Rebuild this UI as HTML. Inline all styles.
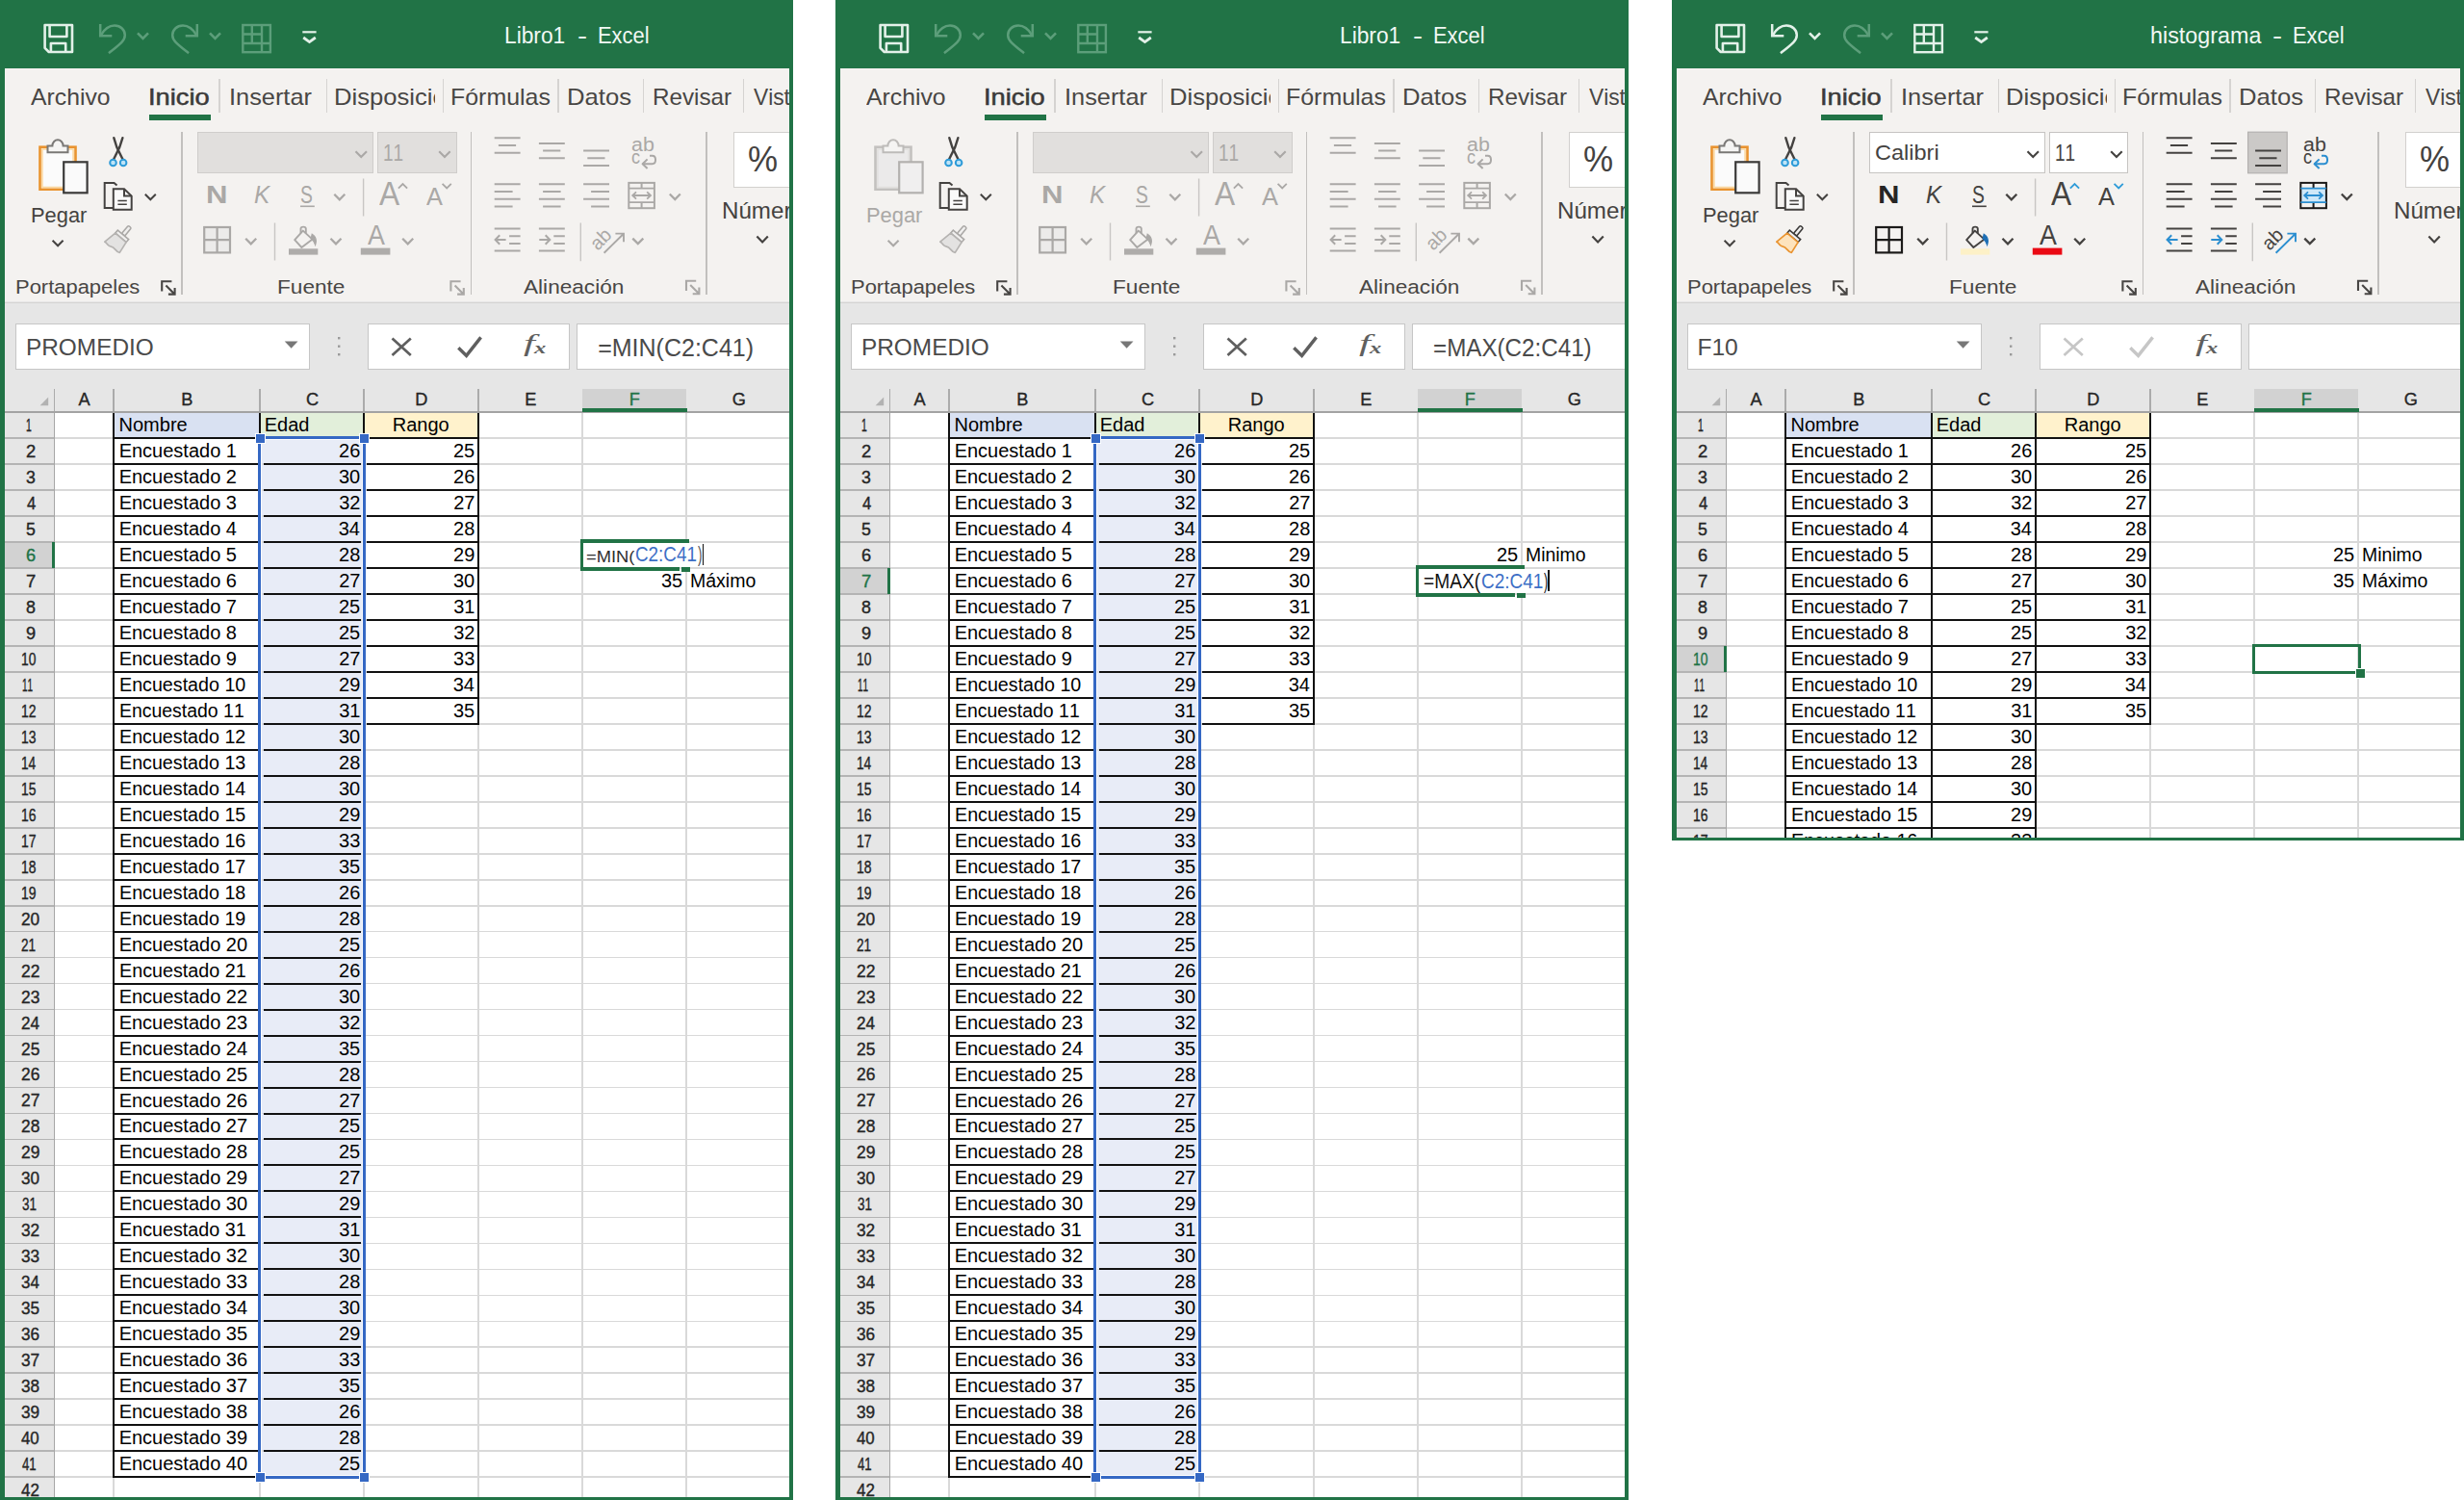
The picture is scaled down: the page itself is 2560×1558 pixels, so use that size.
<!DOCTYPE html>
<html><head><meta charset="utf-8"><title>Excel</title>
<style>
html,body{margin:0;padding:0;background:#fff}
body{width:2560px;height:1558px;position:relative;overflow:hidden;font-family:"Liberation Sans",sans-serif;font-kerning:none;}
.win{position:absolute;overflow:hidden;background:#fff}
.b{position:absolute;display:block}
.t{position:absolute;white-space:pre;line-height:1;transform-origin:0 0;display:block}
</style></head>
<body>
<div class="win" style="left:0px;top:0;width:823.8px;height:1558px"><div class="b" style="left:0px;top:0px;width:823.8px;height:70.6px;background:#217346;"></div><div class="b" style="left:0px;top:70.6px;width:823.8px;height:242.6px;background:#f4f2f0;"></div><div class="b" style="left:0px;top:313.2px;width:823.8px;height:115px;background:#e6e6e6;"></div><div class="b" style="left:0px;top:313.5px;width:823.8px;height:1.9px;background:#d5d4d2;"></div><span class="t" style="left:524.23px;top:24.98px;font-size:24.6px;color:#f1f8f4;transform:scaleX(0.9254);">Libro1</span><span class="t" style="left:599.75px;top:24.98px;font-size:24.6px;color:#f1f8f4;transform:scaleX(1.2321);">-</span><span class="t" style="left:620.7px;top:24.98px;font-size:24.6px;color:#f1f8f4;transform:scaleX(0.8904);">Excel</span><span class="t" style="left:32.35px;top:89.96px;font-size:23.2px;color:#484644;transform:scaleX(1.0676);">Archivo</span><span class="t" style="left:153.98px;top:89.96px;font-size:23.2px;color:#3b3a39;transform:scaleX(1.1754);-webkit-text-stroke:0.5px #3b3a39;">Inicio</span><span class="t" style="left:238.36px;top:89.96px;font-size:23.2px;color:#484644;transform:scaleX(1.0929);">Insertar</span><div class="b" style="left:340px;top:80px;width:112.3px;height:40px;overflow:hidden"><span class="t" style="left:6.6px;top:9.96px;font-size:23.2px;color:#484644;transform:scaleX(1.1046);">Disposición</span></div><span class="t" style="left:467.85px;top:89.96px;font-size:23.2px;color:#484644;transform:scaleX(1.0751);">Fórmulas</span><span class="t" style="left:588.9px;top:89.96px;font-size:23.2px;color:#484644;transform:scaleX(1.1060);">Datos</span><span class="t" style="left:677.71px;top:89.96px;font-size:23.2px;color:#484644;transform:scaleX(1.0452);">Revisar</span><span class="t" style="left:783.4px;top:89.96px;font-size:23.2px;color:#484644;transform:scaleX(0.9812);">Vista</span><div class="b" style="left:227.2px;top:81.8px;width:1.4px;height:35px;background:#d5d3d1;"></div><div class="b" style="left:338.5px;top:81.8px;width:1.4px;height:35px;background:#d5d3d1;"></div><div class="b" style="left:459.7px;top:81.8px;width:1.4px;height:35px;background:#d5d3d1;"></div><div class="b" style="left:579.3px;top:81.8px;width:1.4px;height:35px;background:#d5d3d1;"></div><div class="b" style="left:667.9px;top:81.8px;width:1.4px;height:35px;background:#d5d3d1;"></div><div class="b" style="left:771.6px;top:81.8px;width:1.4px;height:35px;background:#d5d3d1;"></div><div class="b" style="left:155.4px;top:119px;width:64px;height:5.8px;background:#217346;"></div><div class="b" style="left:188.2px;top:136.8px;width:1.6px;height:169px;background:#c2c0be;"></div><div class="b" style="left:488.8px;top:136.8px;width:1.6px;height:169px;background:#c2c0be;"></div><div class="b" style="left:733.4px;top:136.8px;width:1.6px;height:169px;background:#c2c0be;"></div><span class="t" style="left:31.71px;top:211.68px;font-size:22.7px;color:#444240;transform:scaleX(0.9634);">Pegar</span><span class="t" style="left:16.4px;top:289.45px;font-size:19.9px;color:#484644;transform:scaleX(1.1034);">Portapapeles</span><span class="t" style="left:287.54px;top:289.45px;font-size:19.9px;color:#484644;transform:scaleX(1.1373);">Fuente</span><span class="t" style="left:544.46px;top:289.35px;font-size:19.9px;color:#484644;transform:scaleX(1.1371);">Alineación</span><span class="t" style="left:749.72px;top:207.56px;font-size:23.2px;color:#444240;transform:scaleX(1.0410);">Número</span><div class="b" style="left:205.4px;top:136.6px;width:182.8px;height:43.6px;background:#e1dfdd;border:1.5px solid #cfcdcb;box-sizing:border-box;"></div><div class="b" style="left:392.4px;top:136.6px;width:82.2px;height:43.6px;background:#e1dfdd;border:1.5px solid #cfcdcb;box-sizing:border-box;"></div><span class="t" style="left:398.15px;top:146.55px;font-size:24.4px;color:#aaa8a6;transform:scaleX(0.7804);">11</span><span class="t" style="left:214.32px;top:188.55px;font-size:26.4px;color:#aaa8a6;transform:scaleX(1.1791);font-weight:bold;">N</span><span class="t" style="left:263.85px;top:188.55px;font-size:26.4px;color:#aaa8a6;transform:scaleX(0.9233);font-style:italic;">K</span><span class="t" style="left:312.02px;top:188.55px;font-size:26.4px;color:#aaa8a6;transform:scaleX(0.7304);">S</span><span class="t" style="left:393.94px;top:184.2px;font-size:34.5px;color:#aaa8a6;transform:scaleX(0.9180);">A</span><span class="t" style="left:443.15px;top:190.97px;font-size:26.5px;color:#aaa8a6;transform:scaleX(0.9561);">A</span><span class="t" style="left:382.15px;top:230.48px;font-size:29.2px;color:#aaa8a6;transform:scaleX(0.9193);">A</span><div class="b" style="left:762.2px;top:136.8px;width:70px;height:58.2px;background:#fff;border:1.5px solid #d2d0ce;box-sizing:border-box;"></div><span class="t" style="left:777.35px;top:147.17px;font-size:37.6px;color:#444240;transform:scaleX(0.9300);">%</span><span class="t" style="left:655.69px;top:141.01px;font-size:19.6px;color:#aaa8a6;transform:scaleX(1.0921);">ab</span><span class="t" style="left:656.03px;top:154.01px;font-size:19.6px;color:#aaa8a6;transform:scaleX(0.9230);">c</span><span class="t" style="left:616px;top:246px;font-size:20px;color:#aaa8a6;transform:rotate(-45deg);transform-origin:0 50%;">ab</span><div class="b" style="left:16.2px;top:335.8px;width:306px;height:48.2px;background:#fff;border:1.5px solid #c6c6c6;box-sizing:border-box;"></div><div class="b" style="left:381.6px;top:335.8px;width:210.6px;height:48.2px;background:#fff;border:1.5px solid #c6c6c6;box-sizing:border-box;"></div><div class="b" style="left:598.5px;top:335.8px;width:240px;height:48.2px;background:#fff;border:1.5px solid #c6c6c6;box-sizing:border-box;"></div><span class="t" style="left:27.3px;top:348.98px;font-size:24.6px;color:#4a4a4a;transform:scaleX(0.9912);">PROMEDIO</span><span class="t" style="left:621.18px;top:349.04px;font-size:25px;color:#4a4a4a;">=MIN(C2:C41)</span><span class="t" style="left:544.42px;top:344.19px;font-size:26px;color:#5f5f5f;transform:scaleX(1.6419);font-style:italic;font-family:'Liberation Serif',serif;">f</span><span class="t" style="left:555.1px;top:352.7px;font-size:17.6px;color:#5f5f5f;transform:scaleX(1.3978);font-weight:bold;font-style:italic;font-family:'Liberation Serif',serif;">x</span><svg class="b" style="left:0;top:0" width="824" height="430" viewBox="0 0 824 430"><g fill="none" stroke="#e3f1e9" stroke-width="2.6" stroke-linejoin="round"><path d="M46.6,26 H75 V54 H50.8 L46.6,49.8 Z"/><path d="M51.6,26 V38 H69.4 V26"/><path d="M52.9,54 V45 H68.2 V54"/></g><g fill="none" stroke="#5c9e7a" stroke-width="2.5"><path d="M104.2,25 V37.2 H116.3"/><path d="M104.6,36.8 C108.5,30.2 113.5,26.6 119,26.6 C125.3,26.6 129.8,31 129.8,36.4 C129.8,42.2 125,45.6 113,55.2"/></g><polyline points="143,34.3 148.5,39.9 154,34.3" fill="none" stroke="#5c9e7a" stroke-width="2.6"/><g transform="translate(75,0)"><g fill="none" stroke="#5c9e7a" stroke-width="2.5" transform="translate(234,0) scale(-1,1)"><path d="M104.2,25 V37.2 H116.3"/><path d="M104.6,36.8 C108.5,30.2 113.5,26.6 119,26.6 C125.3,26.6 129.8,31 129.8,36.4 C129.8,42.2 125,45.6 113,55.2"/></g></g><polyline points="218,34.3 223.5,39.9 229,34.3" fill="none" stroke="#5c9e7a" stroke-width="2.6"/><g fill="none" stroke="#5c9e7a" stroke-width="2.4"><rect x="252.3" y="26" width="28.6" height="28.2"/><path d="M261.8,26 V45 M272,26 V54.2 M252.3,35.5 H272 M252.3,45 H280.9"/></g><path d="M314.3,33.3 H328.6" stroke="#e3f1e9" stroke-width="2.2" fill="none"/><polyline points="315.2,39 321.5,43.6 327.8,39" fill="none" stroke="#e3f1e9" stroke-width="2.8"/><rect x="41.5" y="152.7" width="37" height="44" fill="#fbfbfb" stroke="#e9932f" stroke-width="2.6"/><rect x="43.9" y="155" width="32.2" height="39.5" fill="none" stroke="#fbd8a0" stroke-width="1.6"/><path d="M49.5,158.2 V151.6 H54.4 C54.4,147.6 57.2,145.3 60,145.3 C62.8,145.3 65.6,147.6 65.6,151.6 H70.5 V158.2 Z" fill="#f5f4f3" stroke="#7a7876" stroke-width="2"/><rect x="66.2" y="168.3" width="24.4" height="32" fill="#fafafa" stroke="#3b3a39" stroke-width="2.2"/><polyline points="54.6,249.8 60.1,255.3 65.6,249.8" fill="none" stroke="#444240" stroke-width="2"/><g fill="none" stroke="#444240" stroke-width="2.4" stroke-linecap="round"><path d="M118.3,143.2 L121.4,153 L127.8,166"/><path d="M127.4,143.2 L124.2,153 L117.8,166"/></g><circle cx="117.5" cy="169" r="3.3" fill="#bfe4f7" stroke="#2e9bd8" stroke-width="2"/><circle cx="128.1" cy="169" r="3.3" fill="#bfe4f7" stroke="#2e9bd8" stroke-width="2"/><g fill="none" stroke="#444240" stroke-width="2"><path d="M121,216 H108.7 V190 H118.5 L121.5,192.6"/><path d="M117.8,196.3 H129 L136.7,203.6 V217.8 H117.8 Z" fill="#fafafa"/><path d="M129,196.3 V203.6 H136.7"/><path d="M122.4,208.4 H131.8 M122.4,212.3 H131.8" stroke-width="1.5"/></g><polyline points="150.8,201.8 156.3,207.3 161.8,201.8" fill="none" stroke="#444240" stroke-width="2"/><g transform="translate(124.3,248.2) rotate(40) scale(0.87)"><rect x="-2.3" y="-19" width="4.6" height="12.5" rx="1.5" fill="#f0efee" stroke="#aaa8a6" stroke-width="1.8"/><rect x="-8.5" y="-6.6" width="17" height="4.4" fill="#f0efee" stroke="#aaa8a6" stroke-width="1.8"/><path d="M-8.5,-2 H8.5 L10.5,12.5 C6,15 2,11 -2,13.5 C-6,16 -9,13 -11.5,14 Z" fill="#e3e2e1" stroke="#b5b3b1" stroke-width="1.9" stroke-linejoin="round"/></g><polyline points="369.5,157.3 375.25,163.10000000000002 381.0,157.3" fill="none" stroke="#aaa8a6" stroke-width="2.1"/><polyline points="456.2,157.3 461.95,163.10000000000002 467.7,157.3" fill="none" stroke="#aaa8a6" stroke-width="2.1"/><path d="M312,214.3 H326.8" stroke="#aaa8a6" stroke-width="1.6"/><polyline points="347.3,201.8 352.8,207.3 358.3,201.8" fill="none" stroke="#aaa8a6" stroke-width="2.3"/><path d="M377.6,185.5 V224.5 M285.5,231.5 V270.5" stroke="#c8c6c4" stroke-width="1.4"/><polyline points="413.9,195.6 418.5,191 423.1,195.6" fill="none" stroke="#aaa8a6" stroke-width="1.8"/><polyline points="459.6,190.8 464.2,195.4 468.8,190.8" fill="none" stroke="#aaa8a6" stroke-width="1.8"/><g fill="#ecebea" stroke="#aaa8a6" stroke-width="2.2"><rect x="212.2" y="236" width="26.8" height="26.4"/><path d="M225.6,236 V262.4 M212.2,249.2 H239" fill="none"/></g><polyline points="255.2,247.8 260.7,253.3 266.2,247.8" fill="none" stroke="#aaa8a6" stroke-width="2.3"/><g fill="none" stroke="#aaa8a6" stroke-width="1.9" stroke-linejoin="round"><path d="M306.2,249.2 L314.8,239.6 L324.6,248.6 L313.4,257 Z"/><path d="M312.5,242.2 V237.6 C312.5,235 317.8,235 317.8,237.6 V242.4"/></g><path d="M324.2,243.2 C327.8,245.5 329.2,249.8 327.6,254.4 C326.4,251 325.6,249.6 323.2,247.8 Z" fill="#aaa8a6" stroke="#aaa8a6" stroke-width="1.2"/><rect x="300" y="258.3" width="30.3" height="6.3" fill="#aeacaa"/><polyline points="343.5,247.8 349.0,253.3 354.5,247.8" fill="none" stroke="#aaa8a6" stroke-width="2.3"/><rect x="374.8" y="257.6" width="30.6" height="7" fill="#aeacaa"/><polyline points="418.2,247.8 423.7,253.3 429.2,247.8" fill="none" stroke="#aaa8a6" stroke-width="2.3"/><path d="M513.7,143.3 H540.6 M517.9000000000001,151 H536.1 M513.7,158.7 H540.6 M559.9,148.9 H586.8 M564.1,156.6 H582.3 M559.9,164.3 H586.8 M606.1,156.6 H633.0 M610.3000000000001,164.3 H628.5 M606.1,172 H633.0 M513.7,191.3 H540.6 M513.7,199 H532.6 M513.7,206.7 H540.6 M513.7,214.4 H532.6 M559.9,191.3 H586.8 M564.1,199 H582.6 M559.9,206.7 H586.8 M564.1,214.4 H582.6 M606.1,191.3 H633 M614.1,199 H633 M606.1,206.7 H633 M614.1,214.4 H633 M513.7,237.5 H540.6 M529.1,245.2 H540.6 M529.1,252.9 H540.6 M513.7,260.6 H540.6 M559.9,237.5 H586.8 M575.3,245.2 H586.8 M575.3,252.9 H586.8 M559.9,260.6 H586.8 " stroke="#aaa8a6" stroke-width="2" fill="none"/><g fill="none" stroke="#aaa8a6" stroke-width="2"><path d="M514.6,249 H525.6 M519.2,244.3 L514.6,249 L519.2,253.7"/><path d="M560.3,249 H571.3 M566.7,244.3 L571.3,249 L566.7,253.7"/></g><path d="M603.3,231.5 V271.3" stroke="#c8c6c4" stroke-width="1.4"/><g fill="none" stroke="#aaa8a6" stroke-width="2" stroke-linejoin="round"><path d="M668,170.2 H677.6 C682.2,170.2 682.2,161.8 677.6,161.8 H675"/><path d="M672.6,165.4 L667.6,170.2 L672.6,175"/></g><g fill="none" stroke="#aaa8a6" stroke-width="2"><rect x="653.3" y="189.9" width="26.6" height="26.3"/><path d="M666.6,189.9 V195.6 M666.6,210.2 V216.2"/></g><path d="M653.3,195.6 H679.9 M653.3,210.2 H679.9" stroke="#aaa8a6" stroke-width="1.8" fill="none"/><g fill="none" stroke="#aaa8a6" stroke-width="1.8"><path d="M657.2,203 H676 M661,199.3 L657.2,203 L661,206.7 M672.2,199.3 L676,203 L672.2,206.7"/></g><polyline points="695.8,201.5 701.3,207.0 706.8,201.5" fill="none" stroke="#aaa8a6" stroke-width="2.3"/><g fill="none" stroke="#aaa8a6" stroke-width="1.9"><path d="M627.6,262.8 L647.4,243.2 M639.4,242.6 H648 V251.2"/></g><polyline points="657.3,247.6 662.8,253.1 668.3,247.6" fill="none" stroke="#aaa8a6" stroke-width="2.3"/><g fill="none" stroke="#484644" stroke-width="2.1"><path d="M168.20000000000002,302.4 V292.2 H178.4"/><path d="M172.4,296.4 L181.4,305.4 M181.6,298.9 V305.59999999999997 H174.9"/></g><g fill="none" stroke="#aaa8a6" stroke-width="2.1"><path d="M468.40000000000003,302.4 V292.2 H478.6"/><path d="M472.6,296.4 L481.6,305.4 M481.8,298.9 V305.59999999999997 H475.1"/></g><g fill="none" stroke="#aaa8a6" stroke-width="2.1"><path d="M713.0,302.0 V291.8 H723.2"/><path d="M717.2,296.0 L726.2,305.0 M726.4000000000001,298.5 V305.2 H719.7"/></g><polyline points="786.4,245.6 792.1,251.4 797.8,245.6" fill="none" stroke="#444240" stroke-width="2.2"/><path d="M295.7,354.4 H309.5 L302.6,361.8 Z" fill="#777"/><rect x="351" y="350.0" width="2.4" height="2.4" fill="#9a9a9a"/><rect x="351" y="358.5" width="2.4" height="2.4" fill="#9a9a9a"/><rect x="351" y="367.0" width="2.4" height="2.4" fill="#9a9a9a"/><path d="M407.5,351.4 L426.8,369 M426.8,351.4 L407.5,369" stroke="#5f5f5f" stroke-width="2.7" fill="none"/><path d="M476.3,361.3 L484.6,369.4 L499.6,350.4" stroke="#5f5f5f" stroke-width="3.4" fill="none" stroke-linejoin="miter"/></svg><div class="b" style="left:0;top:428.2px;width:823.8px;height:1129.8px;overflow:hidden;background:#fff"><div class="b" style="left:0px;top:0px;width:56.4px;height:1129.8px;background:#e6e6e6;"></div><div class="b" style="left:118px;top:0px;width:152px;height:26.98px;background:#d9e1f2;"></div><div class="b" style="left:270px;top:0px;width:108px;height:26.98px;background:#e2efda;"></div><div class="b" style="left:378px;top:0px;width:119px;height:26.98px;background:#fff2cc;"></div><div class="b" style="left:270px;top:26.98px;width:108px;height:1079px;background:#e8ecf7;"></div><div class="b" style="left:56px;top:26.18px;width:823.8px;height:1.6px;background:#d9d9d9;"></div><div class="b" style="left:5px;top:26.18px;width:51px;height:1.6px;background:#b4b4b4;"></div><div class="b" style="left:56px;top:53.15px;width:823.8px;height:1.6px;background:#d9d9d9;"></div><div class="b" style="left:5px;top:53.15px;width:51px;height:1.6px;background:#b4b4b4;"></div><div class="b" style="left:56px;top:80.13px;width:823.8px;height:1.6px;background:#d9d9d9;"></div><div class="b" style="left:5px;top:80.13px;width:51px;height:1.6px;background:#b4b4b4;"></div><div class="b" style="left:56px;top:107.1px;width:823.8px;height:1.6px;background:#d9d9d9;"></div><div class="b" style="left:5px;top:107.1px;width:51px;height:1.6px;background:#b4b4b4;"></div><div class="b" style="left:56px;top:134.07px;width:823.8px;height:1.6px;background:#d9d9d9;"></div><div class="b" style="left:5px;top:134.07px;width:51px;height:1.6px;background:#b4b4b4;"></div><div class="b" style="left:56px;top:161.05px;width:823.8px;height:1.6px;background:#d9d9d9;"></div><div class="b" style="left:5px;top:161.05px;width:51px;height:1.6px;background:#b4b4b4;"></div><div class="b" style="left:56px;top:188.03px;width:823.8px;height:1.6px;background:#d9d9d9;"></div><div class="b" style="left:5px;top:188.03px;width:51px;height:1.6px;background:#b4b4b4;"></div><div class="b" style="left:56px;top:215px;width:823.8px;height:1.6px;background:#d9d9d9;"></div><div class="b" style="left:5px;top:215px;width:51px;height:1.6px;background:#b4b4b4;"></div><div class="b" style="left:56px;top:241.97px;width:823.8px;height:1.6px;background:#d9d9d9;"></div><div class="b" style="left:5px;top:241.97px;width:51px;height:1.6px;background:#b4b4b4;"></div><div class="b" style="left:56px;top:268.95px;width:823.8px;height:1.6px;background:#d9d9d9;"></div><div class="b" style="left:5px;top:268.95px;width:51px;height:1.6px;background:#b4b4b4;"></div><div class="b" style="left:56px;top:295.93px;width:823.8px;height:1.6px;background:#d9d9d9;"></div><div class="b" style="left:5px;top:295.93px;width:51px;height:1.6px;background:#b4b4b4;"></div><div class="b" style="left:56px;top:322.9px;width:823.8px;height:1.6px;background:#d9d9d9;"></div><div class="b" style="left:5px;top:322.9px;width:51px;height:1.6px;background:#b4b4b4;"></div><div class="b" style="left:56px;top:349.88px;width:823.8px;height:1.6px;background:#d9d9d9;"></div><div class="b" style="left:5px;top:349.88px;width:51px;height:1.6px;background:#b4b4b4;"></div><div class="b" style="left:56px;top:376.85px;width:823.8px;height:1.6px;background:#d9d9d9;"></div><div class="b" style="left:5px;top:376.85px;width:51px;height:1.6px;background:#b4b4b4;"></div><div class="b" style="left:56px;top:403.82px;width:823.8px;height:1.6px;background:#d9d9d9;"></div><div class="b" style="left:5px;top:403.82px;width:51px;height:1.6px;background:#b4b4b4;"></div><div class="b" style="left:56px;top:430.8px;width:823.8px;height:1.6px;background:#d9d9d9;"></div><div class="b" style="left:5px;top:430.8px;width:51px;height:1.6px;background:#b4b4b4;"></div><div class="b" style="left:56px;top:457.78px;width:823.8px;height:1.6px;background:#d9d9d9;"></div><div class="b" style="left:5px;top:457.78px;width:51px;height:1.6px;background:#b4b4b4;"></div><div class="b" style="left:56px;top:484.75px;width:823.8px;height:1.6px;background:#d9d9d9;"></div><div class="b" style="left:5px;top:484.75px;width:51px;height:1.6px;background:#b4b4b4;"></div><div class="b" style="left:56px;top:511.72px;width:823.8px;height:1.6px;background:#d9d9d9;"></div><div class="b" style="left:5px;top:511.72px;width:51px;height:1.6px;background:#b4b4b4;"></div><div class="b" style="left:56px;top:538.7px;width:823.8px;height:1.6px;background:#d9d9d9;"></div><div class="b" style="left:5px;top:538.7px;width:51px;height:1.6px;background:#b4b4b4;"></div><div class="b" style="left:56px;top:565.68px;width:823.8px;height:1.6px;background:#d9d9d9;"></div><div class="b" style="left:5px;top:565.68px;width:51px;height:1.6px;background:#b4b4b4;"></div><div class="b" style="left:56px;top:592.65px;width:823.8px;height:1.6px;background:#d9d9d9;"></div><div class="b" style="left:5px;top:592.65px;width:51px;height:1.6px;background:#b4b4b4;"></div><div class="b" style="left:56px;top:619.63px;width:823.8px;height:1.6px;background:#d9d9d9;"></div><div class="b" style="left:5px;top:619.63px;width:51px;height:1.6px;background:#b4b4b4;"></div><div class="b" style="left:56px;top:646.6px;width:823.8px;height:1.6px;background:#d9d9d9;"></div><div class="b" style="left:5px;top:646.6px;width:51px;height:1.6px;background:#b4b4b4;"></div><div class="b" style="left:56px;top:673.58px;width:823.8px;height:1.6px;background:#d9d9d9;"></div><div class="b" style="left:5px;top:673.58px;width:51px;height:1.6px;background:#b4b4b4;"></div><div class="b" style="left:56px;top:700.55px;width:823.8px;height:1.6px;background:#d9d9d9;"></div><div class="b" style="left:5px;top:700.55px;width:51px;height:1.6px;background:#b4b4b4;"></div><div class="b" style="left:56px;top:727.53px;width:823.8px;height:1.6px;background:#d9d9d9;"></div><div class="b" style="left:5px;top:727.53px;width:51px;height:1.6px;background:#b4b4b4;"></div><div class="b" style="left:56px;top:754.5px;width:823.8px;height:1.6px;background:#d9d9d9;"></div><div class="b" style="left:5px;top:754.5px;width:51px;height:1.6px;background:#b4b4b4;"></div><div class="b" style="left:56px;top:781.48px;width:823.8px;height:1.6px;background:#d9d9d9;"></div><div class="b" style="left:5px;top:781.48px;width:51px;height:1.6px;background:#b4b4b4;"></div><div class="b" style="left:56px;top:808.45px;width:823.8px;height:1.6px;background:#d9d9d9;"></div><div class="b" style="left:5px;top:808.45px;width:51px;height:1.6px;background:#b4b4b4;"></div><div class="b" style="left:56px;top:835.43px;width:823.8px;height:1.6px;background:#d9d9d9;"></div><div class="b" style="left:5px;top:835.43px;width:51px;height:1.6px;background:#b4b4b4;"></div><div class="b" style="left:56px;top:862.4px;width:823.8px;height:1.6px;background:#d9d9d9;"></div><div class="b" style="left:5px;top:862.4px;width:51px;height:1.6px;background:#b4b4b4;"></div><div class="b" style="left:56px;top:889.38px;width:823.8px;height:1.6px;background:#d9d9d9;"></div><div class="b" style="left:5px;top:889.38px;width:51px;height:1.6px;background:#b4b4b4;"></div><div class="b" style="left:56px;top:916.35px;width:823.8px;height:1.6px;background:#d9d9d9;"></div><div class="b" style="left:5px;top:916.35px;width:51px;height:1.6px;background:#b4b4b4;"></div><div class="b" style="left:56px;top:943.33px;width:823.8px;height:1.6px;background:#d9d9d9;"></div><div class="b" style="left:5px;top:943.33px;width:51px;height:1.6px;background:#b4b4b4;"></div><div class="b" style="left:56px;top:970.3px;width:823.8px;height:1.6px;background:#d9d9d9;"></div><div class="b" style="left:5px;top:970.3px;width:51px;height:1.6px;background:#b4b4b4;"></div><div class="b" style="left:56px;top:997.28px;width:823.8px;height:1.6px;background:#d9d9d9;"></div><div class="b" style="left:5px;top:997.28px;width:51px;height:1.6px;background:#b4b4b4;"></div><div class="b" style="left:56px;top:1024.25px;width:823.8px;height:1.6px;background:#d9d9d9;"></div><div class="b" style="left:5px;top:1024.25px;width:51px;height:1.6px;background:#b4b4b4;"></div><div class="b" style="left:56px;top:1051.23px;width:823.8px;height:1.6px;background:#d9d9d9;"></div><div class="b" style="left:5px;top:1051.23px;width:51px;height:1.6px;background:#b4b4b4;"></div><div class="b" style="left:56px;top:1078.2px;width:823.8px;height:1.6px;background:#d9d9d9;"></div><div class="b" style="left:5px;top:1078.2px;width:51px;height:1.6px;background:#b4b4b4;"></div><div class="b" style="left:56px;top:1105.18px;width:823.8px;height:1.6px;background:#d9d9d9;"></div><div class="b" style="left:5px;top:1105.18px;width:51px;height:1.6px;background:#b4b4b4;"></div><div class="b" style="left:56px;top:1132.15px;width:823.8px;height:1.6px;background:#d9d9d9;"></div><div class="b" style="left:5px;top:1132.15px;width:51px;height:1.6px;background:#b4b4b4;"></div><div class="b" style="left:117.2px;top:0px;width:1.6px;height:1129.8px;background:#d9d9d9;"></div><div class="b" style="left:269.2px;top:0px;width:1.6px;height:1129.8px;background:#d9d9d9;"></div><div class="b" style="left:377.2px;top:0px;width:1.6px;height:1129.8px;background:#d9d9d9;"></div><div class="b" style="left:496.2px;top:0px;width:1.6px;height:1129.8px;background:#d9d9d9;"></div><div class="b" style="left:604.2px;top:0px;width:1.6px;height:1129.8px;background:#d9d9d9;"></div><div class="b" style="left:712.2px;top:0px;width:1.6px;height:1129.8px;background:#d9d9d9;"></div><div class="b" style="left:55.8px;top:0px;width:1.5px;height:1129.8px;background:#a6a6a6;"></div><div class="b" style="left:5px;top:135.68px;width:51px;height:25.38px;background:#d2d2d2;"></div><div class="b" style="left:54.2px;top:134.47px;width:2.8px;height:27.78px;background:#217346;"></div><span class="t" style="left:27.45px;top:4.92px;font-size:18.4px;color:#262626;transform:scaleX(0.5672);-webkit-text-stroke:0.4px #262626;">1</span><span class="t" style="left:27.07px;top:31.9px;font-size:18.4px;color:#262626;-webkit-text-stroke:0.4px #262626;">2</span><span class="t" style="left:27.33px;top:58.87px;font-size:18.4px;color:#262626;transform:scaleX(0.9629);-webkit-text-stroke:0.4px #262626;">3</span><span class="t" style="left:27.62px;top:85.85px;font-size:18.4px;color:#262626;transform:scaleX(0.9060);-webkit-text-stroke:0.4px #262626;">4</span><span class="t" style="left:27.29px;top:112.82px;font-size:18.4px;color:#262626;transform:scaleX(0.9629);-webkit-text-stroke:0.4px #262626;">5</span><span class="t" style="left:27.08px;top:139.8px;font-size:18.4px;color:#217346;transform:scaleX(0.9894);-webkit-text-stroke:0.4px #217346;">6</span><span class="t" style="left:27.05px;top:166.77px;font-size:18.4px;color:#262626;transform:scaleX(1.0042);-webkit-text-stroke:0.4px #262626;">7</span><span class="t" style="left:27.22px;top:193.75px;font-size:18.4px;color:#262626;transform:scaleX(0.9729);-webkit-text-stroke:0.4px #262626;">8</span><span class="t" style="left:27.15px;top:220.72px;font-size:18.4px;color:#262626;transform:scaleX(0.9883);-webkit-text-stroke:0.4px #262626;">9</span><span class="t" style="left:22.05px;top:247.7px;font-size:18.4px;color:#262626;transform:scaleX(0.7522);-webkit-text-stroke:0.4px #262626;">10</span><span class="t" style="left:22.69px;top:274.67px;font-size:18.4px;color:#262626;transform:scaleX(0.5450);-webkit-text-stroke:0.4px #262626;">11</span><span class="t" style="left:22.03px;top:301.65px;font-size:18.4px;color:#262626;transform:scaleX(0.7608);-webkit-text-stroke:0.4px #262626;">12</span><span class="t" style="left:22.04px;top:328.62px;font-size:18.4px;color:#262626;transform:scaleX(0.7559);-webkit-text-stroke:0.4px #262626;">13</span><span class="t" style="left:22.06px;top:355.6px;font-size:18.4px;color:#262626;transform:scaleX(0.7449);-webkit-text-stroke:0.4px #262626;">14</span><span class="t" style="left:22.04px;top:382.57px;font-size:18.4px;color:#262626;transform:scaleX(0.7544);-webkit-text-stroke:0.4px #262626;">15</span><span class="t" style="left:22.04px;top:409.55px;font-size:18.4px;color:#262626;transform:scaleX(0.7559);-webkit-text-stroke:0.4px #262626;">16</span><span class="t" style="left:22.03px;top:436.52px;font-size:18.4px;color:#262626;transform:scaleX(0.7608);-webkit-text-stroke:0.4px #262626;">17</span><span class="t" style="left:22.04px;top:463.5px;font-size:18.4px;color:#262626;transform:scaleX(0.7555);-webkit-text-stroke:0.4px #262626;">18</span><span class="t" style="left:22.04px;top:490.47px;font-size:18.4px;color:#262626;transform:scaleX(0.7585);-webkit-text-stroke:0.4px #262626;">19</span><span class="t" style="left:21.58px;top:517.45px;font-size:18.4px;color:#262626;transform:scaleX(0.9404);-webkit-text-stroke:0.4px #262626;">20</span><span class="t" style="left:22.41px;top:544.42px;font-size:18.4px;color:#262626;transform:scaleX(0.7402);-webkit-text-stroke:0.4px #262626;">21</span><span class="t" style="left:21.57px;top:571.4px;font-size:18.4px;color:#262626;transform:scaleX(0.9508);-webkit-text-stroke:0.4px #262626;">22</span><span class="t" style="left:21.58px;top:598.37px;font-size:18.4px;color:#262626;transform:scaleX(0.9449);-webkit-text-stroke:0.4px #262626;">23</span><span class="t" style="left:21.59px;top:625.35px;font-size:18.4px;color:#262626;transform:scaleX(0.9315);-webkit-text-stroke:0.4px #262626;">24</span><span class="t" style="left:21.58px;top:652.32px;font-size:18.4px;color:#262626;transform:scaleX(0.9431);-webkit-text-stroke:0.4px #262626;">25</span><span class="t" style="left:21.58px;top:679.3px;font-size:18.4px;color:#262626;transform:scaleX(0.9449);-webkit-text-stroke:0.4px #262626;">26</span><span class="t" style="left:21.57px;top:706.27px;font-size:18.4px;color:#262626;transform:scaleX(0.9508);-webkit-text-stroke:0.4px #262626;">27</span><span class="t" style="left:21.58px;top:733.25px;font-size:18.4px;color:#262626;transform:scaleX(0.9444);-webkit-text-stroke:0.4px #262626;">28</span><span class="t" style="left:21.57px;top:760.22px;font-size:18.4px;color:#262626;transform:scaleX(0.9481);-webkit-text-stroke:0.4px #262626;">29</span><span class="t" style="left:21.8px;top:787.2px;font-size:18.4px;color:#262626;transform:scaleX(0.9293);-webkit-text-stroke:0.4px #262626;">30</span><span class="t" style="left:22.59px;top:814.17px;font-size:18.4px;color:#262626;transform:scaleX(0.7314);-webkit-text-stroke:0.4px #262626;">31</span><span class="t" style="left:21.79px;top:841.15px;font-size:18.4px;color:#262626;transform:scaleX(0.9395);-webkit-text-stroke:0.4px #262626;">32</span><span class="t" style="left:21.8px;top:868.12px;font-size:18.4px;color:#262626;transform:scaleX(0.9337);-webkit-text-stroke:0.4px #262626;">33</span><span class="t" style="left:21.8px;top:895.1px;font-size:18.4px;color:#262626;transform:scaleX(0.9206);-webkit-text-stroke:0.4px #262626;">34</span><span class="t" style="left:21.8px;top:922.07px;font-size:18.4px;color:#262626;transform:scaleX(0.9319);-webkit-text-stroke:0.4px #262626;">35</span><span class="t" style="left:21.8px;top:949.05px;font-size:18.4px;color:#262626;transform:scaleX(0.9337);-webkit-text-stroke:0.4px #262626;">36</span><span class="t" style="left:21.79px;top:976.02px;font-size:18.4px;color:#262626;transform:scaleX(0.9395);-webkit-text-stroke:0.4px #262626;">37</span><span class="t" style="left:21.8px;top:1003px;font-size:18.4px;color:#262626;transform:scaleX(0.9332);-webkit-text-stroke:0.4px #262626;">38</span><span class="t" style="left:21.79px;top:1029.97px;font-size:18.4px;color:#262626;transform:scaleX(0.9368);-webkit-text-stroke:0.4px #262626;">39</span><span class="t" style="left:22.06px;top:1056.95px;font-size:18.4px;color:#262626;transform:scaleX(0.9159);-webkit-text-stroke:0.4px #262626;">40</span><span class="t" style="left:22.8px;top:1083.92px;font-size:18.4px;color:#262626;transform:scaleX(0.7208);-webkit-text-stroke:0.4px #262626;">41</span><span class="t" style="left:22.06px;top:1110.9px;font-size:18.4px;color:#262626;transform:scaleX(0.9258);-webkit-text-stroke:0.4px #262626;">42</span><span class="t" style="left:22.06px;top:1137.87px;font-size:18.4px;color:#262626;transform:scaleX(0.9202);-webkit-text-stroke:0.4px #262626;">43</span><div class="b" style="left:117.4px;top:0px;width:2px;height:1106.98px;background:#111;"></div><div class="b" style="left:269px;top:0px;width:2px;height:26.98px;background:#111;"></div><div class="b" style="left:377px;top:0px;width:2px;height:26.98px;background:#111;"></div><div class="b" style="left:378px;top:26.98px;width:0px;height:297.73px;background:#111;"></div><div class="b" style="left:496px;top:0px;width:2px;height:324.7px;background:#111;"></div><div class="b" style="left:117.4px;top:25.98px;width:153.6px;height:2px;background:#111;"></div><div class="b" style="left:270px;top:25.98px;width:109px;height:2px;background:#111;"></div><div class="b" style="left:379px;top:25.98px;width:119px;height:2px;background:#111;"></div><div class="b" style="left:117.4px;top:52.95px;width:152.6px;height:2px;background:#111;"></div><div class="b" style="left:273.6px;top:52.95px;width:101px;height:2px;background:#111;"></div><div class="b" style="left:381px;top:52.95px;width:117px;height:2px;background:#111;"></div><div class="b" style="left:117.4px;top:79.93px;width:152.6px;height:2px;background:#111;"></div><div class="b" style="left:273.6px;top:79.93px;width:101px;height:2px;background:#111;"></div><div class="b" style="left:381px;top:79.93px;width:117px;height:2px;background:#111;"></div><div class="b" style="left:117.4px;top:106.9px;width:152.6px;height:2px;background:#111;"></div><div class="b" style="left:273.6px;top:106.9px;width:101px;height:2px;background:#111;"></div><div class="b" style="left:381px;top:106.9px;width:117px;height:2px;background:#111;"></div><div class="b" style="left:117.4px;top:133.88px;width:152.6px;height:2px;background:#111;"></div><div class="b" style="left:273.6px;top:133.88px;width:101px;height:2px;background:#111;"></div><div class="b" style="left:381px;top:133.88px;width:117px;height:2px;background:#111;"></div><div class="b" style="left:117.4px;top:160.85px;width:152.6px;height:2px;background:#111;"></div><div class="b" style="left:273.6px;top:160.85px;width:101px;height:2px;background:#111;"></div><div class="b" style="left:381px;top:160.85px;width:117px;height:2px;background:#111;"></div><div class="b" style="left:117.4px;top:187.83px;width:152.6px;height:2px;background:#111;"></div><div class="b" style="left:273.6px;top:187.83px;width:101px;height:2px;background:#111;"></div><div class="b" style="left:381px;top:187.83px;width:117px;height:2px;background:#111;"></div><div class="b" style="left:117.4px;top:214.8px;width:152.6px;height:2px;background:#111;"></div><div class="b" style="left:273.6px;top:214.8px;width:101px;height:2px;background:#111;"></div><div class="b" style="left:381px;top:214.8px;width:117px;height:2px;background:#111;"></div><div class="b" style="left:117.4px;top:241.78px;width:152.6px;height:2px;background:#111;"></div><div class="b" style="left:273.6px;top:241.78px;width:101px;height:2px;background:#111;"></div><div class="b" style="left:381px;top:241.78px;width:117px;height:2px;background:#111;"></div><div class="b" style="left:117.4px;top:268.75px;width:152.6px;height:2px;background:#111;"></div><div class="b" style="left:273.6px;top:268.75px;width:101px;height:2px;background:#111;"></div><div class="b" style="left:381px;top:268.75px;width:117px;height:2px;background:#111;"></div><div class="b" style="left:117.4px;top:295.73px;width:152.6px;height:2px;background:#111;"></div><div class="b" style="left:273.6px;top:295.73px;width:101px;height:2px;background:#111;"></div><div class="b" style="left:381px;top:295.73px;width:117px;height:2px;background:#111;"></div><div class="b" style="left:117.4px;top:322.7px;width:152.6px;height:2px;background:#111;"></div><div class="b" style="left:273.6px;top:322.7px;width:101px;height:2px;background:#111;"></div><div class="b" style="left:381px;top:322.7px;width:117px;height:2px;background:#111;"></div><div class="b" style="left:117.4px;top:349.68px;width:152.6px;height:2px;background:#111;"></div><div class="b" style="left:273.6px;top:349.68px;width:101px;height:2px;background:#111;"></div><div class="b" style="left:117.4px;top:376.65px;width:152.6px;height:2px;background:#111;"></div><div class="b" style="left:273.6px;top:376.65px;width:101px;height:2px;background:#111;"></div><div class="b" style="left:117.4px;top:403.62px;width:152.6px;height:2px;background:#111;"></div><div class="b" style="left:273.6px;top:403.62px;width:101px;height:2px;background:#111;"></div><div class="b" style="left:117.4px;top:430.6px;width:152.6px;height:2px;background:#111;"></div><div class="b" style="left:273.6px;top:430.6px;width:101px;height:2px;background:#111;"></div><div class="b" style="left:117.4px;top:457.58px;width:152.6px;height:2px;background:#111;"></div><div class="b" style="left:273.6px;top:457.58px;width:101px;height:2px;background:#111;"></div><div class="b" style="left:117.4px;top:484.55px;width:152.6px;height:2px;background:#111;"></div><div class="b" style="left:273.6px;top:484.55px;width:101px;height:2px;background:#111;"></div><div class="b" style="left:117.4px;top:511.52px;width:152.6px;height:2px;background:#111;"></div><div class="b" style="left:273.6px;top:511.52px;width:101px;height:2px;background:#111;"></div><div class="b" style="left:117.4px;top:538.5px;width:152.6px;height:2px;background:#111;"></div><div class="b" style="left:273.6px;top:538.5px;width:101px;height:2px;background:#111;"></div><div class="b" style="left:117.4px;top:565.48px;width:152.6px;height:2px;background:#111;"></div><div class="b" style="left:273.6px;top:565.48px;width:101px;height:2px;background:#111;"></div><div class="b" style="left:117.4px;top:592.45px;width:152.6px;height:2px;background:#111;"></div><div class="b" style="left:273.6px;top:592.45px;width:101px;height:2px;background:#111;"></div><div class="b" style="left:117.4px;top:619.43px;width:152.6px;height:2px;background:#111;"></div><div class="b" style="left:273.6px;top:619.43px;width:101px;height:2px;background:#111;"></div><div class="b" style="left:117.4px;top:646.4px;width:152.6px;height:2px;background:#111;"></div><div class="b" style="left:273.6px;top:646.4px;width:101px;height:2px;background:#111;"></div><div class="b" style="left:117.4px;top:673.38px;width:152.6px;height:2px;background:#111;"></div><div class="b" style="left:273.6px;top:673.38px;width:101px;height:2px;background:#111;"></div><div class="b" style="left:117.4px;top:700.35px;width:152.6px;height:2px;background:#111;"></div><div class="b" style="left:273.6px;top:700.35px;width:101px;height:2px;background:#111;"></div><div class="b" style="left:117.4px;top:727.33px;width:152.6px;height:2px;background:#111;"></div><div class="b" style="left:273.6px;top:727.33px;width:101px;height:2px;background:#111;"></div><div class="b" style="left:117.4px;top:754.3px;width:152.6px;height:2px;background:#111;"></div><div class="b" style="left:273.6px;top:754.3px;width:101px;height:2px;background:#111;"></div><div class="b" style="left:117.4px;top:781.28px;width:152.6px;height:2px;background:#111;"></div><div class="b" style="left:273.6px;top:781.28px;width:101px;height:2px;background:#111;"></div><div class="b" style="left:117.4px;top:808.25px;width:152.6px;height:2px;background:#111;"></div><div class="b" style="left:273.6px;top:808.25px;width:101px;height:2px;background:#111;"></div><div class="b" style="left:117.4px;top:835.23px;width:152.6px;height:2px;background:#111;"></div><div class="b" style="left:273.6px;top:835.23px;width:101px;height:2px;background:#111;"></div><div class="b" style="left:117.4px;top:862.2px;width:152.6px;height:2px;background:#111;"></div><div class="b" style="left:273.6px;top:862.2px;width:101px;height:2px;background:#111;"></div><div class="b" style="left:117.4px;top:889.18px;width:152.6px;height:2px;background:#111;"></div><div class="b" style="left:273.6px;top:889.18px;width:101px;height:2px;background:#111;"></div><div class="b" style="left:117.4px;top:916.15px;width:152.6px;height:2px;background:#111;"></div><div class="b" style="left:273.6px;top:916.15px;width:101px;height:2px;background:#111;"></div><div class="b" style="left:117.4px;top:943.12px;width:152.6px;height:2px;background:#111;"></div><div class="b" style="left:273.6px;top:943.12px;width:101px;height:2px;background:#111;"></div><div class="b" style="left:117.4px;top:970.1px;width:152.6px;height:2px;background:#111;"></div><div class="b" style="left:273.6px;top:970.1px;width:101px;height:2px;background:#111;"></div><div class="b" style="left:117.4px;top:997.08px;width:152.6px;height:2px;background:#111;"></div><div class="b" style="left:273.6px;top:997.08px;width:101px;height:2px;background:#111;"></div><div class="b" style="left:117.4px;top:1024.05px;width:152.6px;height:2px;background:#111;"></div><div class="b" style="left:273.6px;top:1024.05px;width:101px;height:2px;background:#111;"></div><div class="b" style="left:117.4px;top:1051.03px;width:152.6px;height:2px;background:#111;"></div><div class="b" style="left:273.6px;top:1051.03px;width:101px;height:2px;background:#111;"></div><div class="b" style="left:117.4px;top:1078px;width:152.6px;height:2px;background:#111;"></div><div class="b" style="left:273.6px;top:1078px;width:101px;height:2px;background:#111;"></div><div class="b" style="left:117.4px;top:1104.98px;width:152.6px;height:2px;background:#111;"></div><div class="b" style="left:273.6px;top:1104.98px;width:101px;height:2px;background:#111;"></div><span class="t" style="left:123.56px;top:2.97px;font-size:20px;color:#000;">Nombre</span><span class="t" style="left:274.76px;top:2.97px;font-size:20px;color:#000;">Edad</span><span class="t" style="left:407.73px;top:2.97px;font-size:20px;color:#000;">Rango</span><span class="t" style="left:123.66px;top:29.95px;font-size:20px;color:#000;">Encuestado 1</span><span class="t" style="left:352.03px;top:29.95px;font-size:20px;color:#000;">26</span><span class="t" style="left:470.99px;top:29.95px;font-size:20px;color:#000;">25</span><span class="t" style="left:123.66px;top:56.92px;font-size:20px;color:#000;">Encuestado 2</span><span class="t" style="left:351.94px;top:56.92px;font-size:20px;color:#000;">30</span><span class="t" style="left:471.03px;top:56.92px;font-size:20px;color:#000;">26</span><span class="t" style="left:123.66px;top:83.9px;font-size:20px;color:#000;">Encuestado 3</span><span class="t" style="left:352.16px;top:83.9px;font-size:20px;color:#000;">32</span><span class="t" style="left:471.16px;top:83.9px;font-size:20px;color:#000;">27</span><span class="t" style="left:123.66px;top:110.87px;font-size:20px;color:#000;">Encuestado 4</span><span class="t" style="left:351.74px;top:110.87px;font-size:20px;color:#000;">34</span><span class="t" style="left:471.02px;top:110.87px;font-size:20px;color:#000;">28</span><span class="t" style="left:123.66px;top:137.84px;font-size:20px;color:#000;">Encuestado 5</span><span class="t" style="left:352.02px;top:137.84px;font-size:20px;color:#000;">28</span><span class="t" style="left:471.1px;top:137.84px;font-size:20px;color:#000;">29</span><span class="t" style="left:123.66px;top:164.82px;font-size:20px;color:#000;">Encuestado 6</span><span class="t" style="left:352.16px;top:164.82px;font-size:20px;color:#000;">27</span><span class="t" style="left:470.94px;top:164.82px;font-size:20px;color:#000;">30</span><span class="t" style="left:123.66px;top:191.8px;font-size:20px;color:#000;">Encuestado 7</span><span class="t" style="left:351.99px;top:191.8px;font-size:20px;color:#000;">25</span><span class="t" style="left:471.13px;top:191.8px;font-size:20px;color:#000;">31</span><span class="t" style="left:123.66px;top:218.77px;font-size:20px;color:#000;">Encuestado 8</span><span class="t" style="left:351.99px;top:218.77px;font-size:20px;color:#000;">25</span><span class="t" style="left:471.16px;top:218.77px;font-size:20px;color:#000;">32</span><span class="t" style="left:123.66px;top:245.75px;font-size:20px;color:#000;">Encuestado 9</span><span class="t" style="left:352.16px;top:245.75px;font-size:20px;color:#000;">27</span><span class="t" style="left:471.03px;top:245.75px;font-size:20px;color:#000;">33</span><span class="t" style="left:123.69px;top:272.72px;font-size:20px;color:#000;transform:scaleX(0.9840);">Encuestado 10</span><span class="t" style="left:352.1px;top:272.72px;font-size:20px;color:#000;">29</span><span class="t" style="left:470.74px;top:272.72px;font-size:20px;color:#000;">34</span><span class="t" style="left:123.71px;top:299.69px;font-size:20px;color:#000;transform:scaleX(0.9720);">Encuestado 11</span><span class="t" style="left:352.13px;top:299.69px;font-size:20px;color:#000;">31</span><span class="t" style="left:470.99px;top:299.69px;font-size:20px;color:#000;">35</span><span class="t" style="left:123.69px;top:326.67px;font-size:20px;color:#000;transform:scaleX(0.9840);">Encuestado 12</span><span class="t" style="left:351.94px;top:326.67px;font-size:20px;color:#000;">30</span><span class="t" style="left:123.69px;top:353.64px;font-size:20px;color:#000;transform:scaleX(0.9840);">Encuestado 13</span><span class="t" style="left:352.02px;top:353.64px;font-size:20px;color:#000;">28</span><span class="t" style="left:123.69px;top:380.62px;font-size:20px;color:#000;transform:scaleX(0.9840);">Encuestado 14</span><span class="t" style="left:351.94px;top:380.62px;font-size:20px;color:#000;">30</span><span class="t" style="left:123.69px;top:407.59px;font-size:20px;color:#000;transform:scaleX(0.9840);">Encuestado 15</span><span class="t" style="left:352.1px;top:407.59px;font-size:20px;color:#000;">29</span><span class="t" style="left:123.69px;top:434.57px;font-size:20px;color:#000;transform:scaleX(0.9840);">Encuestado 16</span><span class="t" style="left:352.03px;top:434.57px;font-size:20px;color:#000;">33</span><span class="t" style="left:123.69px;top:461.55px;font-size:20px;color:#000;transform:scaleX(0.9840);">Encuestado 17</span><span class="t" style="left:351.99px;top:461.55px;font-size:20px;color:#000;">35</span><span class="t" style="left:123.69px;top:488.52px;font-size:20px;color:#000;transform:scaleX(0.9840);">Encuestado 18</span><span class="t" style="left:352.03px;top:488.52px;font-size:20px;color:#000;">26</span><span class="t" style="left:123.69px;top:515.5px;font-size:20px;color:#000;transform:scaleX(0.9840);">Encuestado 19</span><span class="t" style="left:352.02px;top:515.5px;font-size:20px;color:#000;">28</span><span class="t" style="left:123.66px;top:542.47px;font-size:20px;color:#000;">Encuestado 20</span><span class="t" style="left:351.99px;top:542.47px;font-size:20px;color:#000;">25</span><span class="t" style="left:123.68px;top:569.45px;font-size:20px;color:#000;transform:scaleX(0.9870);">Encuestado 21</span><span class="t" style="left:352.03px;top:569.45px;font-size:20px;color:#000;">26</span><span class="t" style="left:123.66px;top:596.42px;font-size:20px;color:#000;">Encuestado 22</span><span class="t" style="left:351.94px;top:596.42px;font-size:20px;color:#000;">30</span><span class="t" style="left:123.66px;top:623.4px;font-size:20px;color:#000;">Encuestado 23</span><span class="t" style="left:352.16px;top:623.4px;font-size:20px;color:#000;">32</span><span class="t" style="left:123.66px;top:650.37px;font-size:20px;color:#000;">Encuestado 24</span><span class="t" style="left:351.99px;top:650.37px;font-size:20px;color:#000;">35</span><span class="t" style="left:123.66px;top:677.35px;font-size:20px;color:#000;">Encuestado 25</span><span class="t" style="left:352.02px;top:677.35px;font-size:20px;color:#000;">28</span><span class="t" style="left:123.66px;top:704.32px;font-size:20px;color:#000;">Encuestado 26</span><span class="t" style="left:352.16px;top:704.32px;font-size:20px;color:#000;">27</span><span class="t" style="left:123.66px;top:731.3px;font-size:20px;color:#000;">Encuestado 27</span><span class="t" style="left:351.99px;top:731.3px;font-size:20px;color:#000;">25</span><span class="t" style="left:123.66px;top:758.27px;font-size:20px;color:#000;">Encuestado 28</span><span class="t" style="left:351.99px;top:758.27px;font-size:20px;color:#000;">25</span><span class="t" style="left:123.66px;top:785.25px;font-size:20px;color:#000;">Encuestado 29</span><span class="t" style="left:352.16px;top:785.25px;font-size:20px;color:#000;">27</span><span class="t" style="left:123.66px;top:812.22px;font-size:20px;color:#000;">Encuestado 30</span><span class="t" style="left:352.1px;top:812.22px;font-size:20px;color:#000;">29</span><span class="t" style="left:123.68px;top:839.2px;font-size:20px;color:#000;transform:scaleX(0.9870);">Encuestado 31</span><span class="t" style="left:352.13px;top:839.2px;font-size:20px;color:#000;">31</span><span class="t" style="left:123.66px;top:866.17px;font-size:20px;color:#000;">Encuestado 32</span><span class="t" style="left:351.94px;top:866.17px;font-size:20px;color:#000;">30</span><span class="t" style="left:123.66px;top:893.15px;font-size:20px;color:#000;">Encuestado 33</span><span class="t" style="left:352.02px;top:893.15px;font-size:20px;color:#000;">28</span><span class="t" style="left:123.66px;top:920.12px;font-size:20px;color:#000;">Encuestado 34</span><span class="t" style="left:351.94px;top:920.12px;font-size:20px;color:#000;">30</span><span class="t" style="left:123.66px;top:947.1px;font-size:20px;color:#000;">Encuestado 35</span><span class="t" style="left:352.1px;top:947.1px;font-size:20px;color:#000;">29</span><span class="t" style="left:123.66px;top:974.07px;font-size:20px;color:#000;">Encuestado 36</span><span class="t" style="left:352.03px;top:974.07px;font-size:20px;color:#000;">33</span><span class="t" style="left:123.66px;top:1001.05px;font-size:20px;color:#000;">Encuestado 37</span><span class="t" style="left:351.99px;top:1001.05px;font-size:20px;color:#000;">35</span><span class="t" style="left:123.66px;top:1028.02px;font-size:20px;color:#000;">Encuestado 38</span><span class="t" style="left:352.03px;top:1028.02px;font-size:20px;color:#000;">26</span><span class="t" style="left:123.66px;top:1055px;font-size:20px;color:#000;">Encuestado 39</span><span class="t" style="left:352.02px;top:1055px;font-size:20px;color:#000;">28</span><span class="t" style="left:123.66px;top:1081.97px;font-size:20px;color:#000;">Encuestado 40</span><span class="t" style="left:351.99px;top:1081.97px;font-size:20px;color:#000;">25</span><span class="t" style="left:686.99px;top:164.82px;font-size:20px;color:#000;">35</span><span class="t" style="left:717.3px;top:164.82px;font-size:20px;color:#000;transform:scaleX(0.9759);">Máximo</span><div class="b" style="left:267.7px;top:24.78px;width:112.8px;height:1082.8px;border:3px solid #3568c4;box-sizing:border-box;box-shadow:inset 0 0 0 1px rgba(255,255,255,.85)"></div><div class="b" style="left:264.7px;top:21.58px;width:11.2px;height:11.2px;background:#3568c4;border:1.2px solid #fff;box-sizing:border-box;"></div><div class="b" style="left:264.7px;top:1100.58px;width:11.2px;height:11.2px;background:#3568c4;border:1.2px solid #fff;box-sizing:border-box;"></div><div class="b" style="left:372.6px;top:21.58px;width:11.2px;height:11.2px;background:#3568c4;border:1.2px solid #fff;box-sizing:border-box;"></div><div class="b" style="left:372.6px;top:1100.58px;width:11.2px;height:11.2px;background:#3568c4;border:1.2px solid #fff;box-sizing:border-box;"></div><div class="b" style="left:606px;top:135.68px;width:126px;height:25.38px;background:#fff;"></div><div class="b" style="left:603.2px;top:132.28px;width:113px;height:3.3px;background:#217346;"></div><div class="b" style="left:603.2px;top:132.28px;width:3.2px;height:32.18px;background:#217346;"></div><div class="b" style="left:603.2px;top:161.05px;width:103px;height:3.3px;background:#217346;"></div><div class="b" style="left:708.4px;top:161.05px;width:9px;height:4.6px;background:#217346;"></div><span class="t" style="left:609.31px;top:141.32px;font-size:17.2px;color:#2e2e2e;transform:scaleX(1.0656);">=MIN(</span><span class="t" style="left:660.34px;top:136.91px;font-size:22.4px;color:#3d6fc6;transform:scaleX(0.8424);">C2:C41</span><span class="t" style="left:724.52px;top:136.91px;font-size:22.4px;color:#555;transform:scaleX(0.6062);">)</span><div class="b" style="left:729.5px;top:136.47px;width:1.9px;height:22.8px;background:#111;"></div></div><div class="b" style="left:0px;top:403.8px;width:823.8px;height:24.2px;background:#e6e6e6;"></div><div class="b" style="left:605px;top:404.3px;width:108.4px;height:23.8px;background:#d2d2d2;"></div><div class="b" style="left:604.6px;top:424.3px;width:109.2px;height:3.9px;background:#217346;"></div><span class="t" style="left:81.53px;top:405.89px;font-size:18.2px;color:#262626;-webkit-text-stroke:0.35px #262626;">A</span><span class="t" style="left:188.26px;top:405.89px;font-size:18.2px;color:#262626;-webkit-text-stroke:0.35px #262626;">B</span><span class="t" style="left:317.91px;top:405.89px;font-size:18.2px;color:#262626;-webkit-text-stroke:0.35px #262626;">C</span><span class="t" style="left:431.22px;top:405.89px;font-size:18.2px;color:#262626;-webkit-text-stroke:0.35px #262626;">D</span><span class="t" style="left:545.17px;top:405.89px;font-size:18.2px;color:#262626;-webkit-text-stroke:0.35px #262626;">E</span><span class="t" style="left:653.66px;top:405.89px;font-size:18.2px;color:#217346;-webkit-text-stroke:0.35px #217346;">F</span><span class="t" style="left:760.74px;top:405.89px;font-size:18.2px;color:#262626;-webkit-text-stroke:0.35px #262626;">G</span><div class="b" style="left:55.7px;top:404px;width:1.6px;height:24px;background:#ababab;"></div><div class="b" style="left:117.2px;top:404px;width:1.6px;height:24px;background:#ababab;"></div><div class="b" style="left:269.2px;top:404px;width:1.6px;height:24px;background:#ababab;"></div><div class="b" style="left:377.2px;top:404px;width:1.6px;height:24px;background:#ababab;"></div><div class="b" style="left:496.2px;top:404px;width:1.6px;height:24px;background:#ababab;"></div><div class="b" style="left:5px;top:427.4px;width:823.8px;height:1.5px;background:#a3a3a3;"></div><div class="b" style="left:604.6px;top:426.2px;width:109.2px;height:2.2px;background:#217346;"></div><svg class="b" style="left:41px;top:412px" width="10" height="10"><path d="M9.2,0.6 V9.2 H0.6 Z" fill="#b2b2b2"/></svg><div class="b" style="left:0px;top:0px;width:5.2px;height:1558px;background:#217346;"></div><div class="b" style="left:820.2px;top:0px;width:3.6px;height:1558px;background:#217346;"></div><div class="b" style="left:0px;top:1554.7px;width:823.8px;height:3.3px;background:#217346;"></div></div>
<div class="win" style="left:868px;top:0;width:824px;height:1558px"><div class="b" style="left:0px;top:0px;width:824px;height:70.6px;background:#217346;"></div><div class="b" style="left:0px;top:70.6px;width:824px;height:242.6px;background:#f4f2f0;"></div><div class="b" style="left:0px;top:313.2px;width:824px;height:115px;background:#e6e6e6;"></div><div class="b" style="left:0px;top:313.5px;width:824px;height:1.9px;background:#d5d4d2;"></div><span class="t" style="left:524.23px;top:24.98px;font-size:24.6px;color:#f1f8f4;transform:scaleX(0.9254);">Libro1</span><span class="t" style="left:599.75px;top:24.98px;font-size:24.6px;color:#f1f8f4;transform:scaleX(1.2321);">-</span><span class="t" style="left:620.7px;top:24.98px;font-size:24.6px;color:#f1f8f4;transform:scaleX(0.8904);">Excel</span><span class="t" style="left:32.35px;top:89.96px;font-size:23.2px;color:#484644;transform:scaleX(1.0676);">Archivo</span><span class="t" style="left:153.98px;top:89.96px;font-size:23.2px;color:#3b3a39;transform:scaleX(1.1754);-webkit-text-stroke:0.5px #3b3a39;">Inicio</span><span class="t" style="left:238.36px;top:89.96px;font-size:23.2px;color:#484644;transform:scaleX(1.0929);">Insertar</span><div class="b" style="left:340px;top:80px;width:112.3px;height:40px;overflow:hidden"><span class="t" style="left:6.6px;top:9.96px;font-size:23.2px;color:#484644;transform:scaleX(1.1046);">Disposición</span></div><span class="t" style="left:467.85px;top:89.96px;font-size:23.2px;color:#484644;transform:scaleX(1.0751);">Fórmulas</span><span class="t" style="left:588.9px;top:89.96px;font-size:23.2px;color:#484644;transform:scaleX(1.1060);">Datos</span><span class="t" style="left:677.71px;top:89.96px;font-size:23.2px;color:#484644;transform:scaleX(1.0452);">Revisar</span><span class="t" style="left:783.4px;top:89.96px;font-size:23.2px;color:#484644;transform:scaleX(0.9812);">Vista</span><div class="b" style="left:227.2px;top:81.8px;width:1.4px;height:35px;background:#d5d3d1;"></div><div class="b" style="left:338.5px;top:81.8px;width:1.4px;height:35px;background:#d5d3d1;"></div><div class="b" style="left:459.7px;top:81.8px;width:1.4px;height:35px;background:#d5d3d1;"></div><div class="b" style="left:579.3px;top:81.8px;width:1.4px;height:35px;background:#d5d3d1;"></div><div class="b" style="left:667.9px;top:81.8px;width:1.4px;height:35px;background:#d5d3d1;"></div><div class="b" style="left:771.6px;top:81.8px;width:1.4px;height:35px;background:#d5d3d1;"></div><div class="b" style="left:155.4px;top:119px;width:64px;height:5.8px;background:#217346;"></div><div class="b" style="left:188.2px;top:136.8px;width:1.6px;height:169px;background:#c2c0be;"></div><div class="b" style="left:488.8px;top:136.8px;width:1.6px;height:169px;background:#c2c0be;"></div><div class="b" style="left:733.4px;top:136.8px;width:1.6px;height:169px;background:#c2c0be;"></div><span class="t" style="left:31.71px;top:211.68px;font-size:22.7px;color:#aaa8a6;transform:scaleX(0.9634);">Pegar</span><span class="t" style="left:16.4px;top:289.45px;font-size:19.9px;color:#484644;transform:scaleX(1.1034);">Portapapeles</span><span class="t" style="left:287.54px;top:289.45px;font-size:19.9px;color:#484644;transform:scaleX(1.1373);">Fuente</span><span class="t" style="left:544.46px;top:289.35px;font-size:19.9px;color:#484644;transform:scaleX(1.1371);">Alineación</span><span class="t" style="left:749.72px;top:207.56px;font-size:23.2px;color:#444240;transform:scaleX(1.0410);">Número</span><div class="b" style="left:205.4px;top:136.6px;width:182.8px;height:43.6px;background:#e1dfdd;border:1.5px solid #cfcdcb;box-sizing:border-box;"></div><div class="b" style="left:392.4px;top:136.6px;width:82.2px;height:43.6px;background:#e1dfdd;border:1.5px solid #cfcdcb;box-sizing:border-box;"></div><span class="t" style="left:398.15px;top:146.55px;font-size:24.4px;color:#aaa8a6;transform:scaleX(0.7804);">11</span><span class="t" style="left:214.32px;top:188.55px;font-size:26.4px;color:#aaa8a6;transform:scaleX(1.1791);font-weight:bold;">N</span><span class="t" style="left:263.85px;top:188.55px;font-size:26.4px;color:#aaa8a6;transform:scaleX(0.9233);font-style:italic;">K</span><span class="t" style="left:312.02px;top:188.55px;font-size:26.4px;color:#aaa8a6;transform:scaleX(0.7304);">S</span><span class="t" style="left:393.94px;top:184.2px;font-size:34.5px;color:#aaa8a6;transform:scaleX(0.9180);">A</span><span class="t" style="left:443.15px;top:190.97px;font-size:26.5px;color:#aaa8a6;transform:scaleX(0.9561);">A</span><span class="t" style="left:382.15px;top:230.48px;font-size:29.2px;color:#aaa8a6;transform:scaleX(0.9193);">A</span><div class="b" style="left:762.2px;top:136.8px;width:70px;height:58.2px;background:#fff;border:1.5px solid #d2d0ce;box-sizing:border-box;"></div><span class="t" style="left:777.35px;top:147.17px;font-size:37.6px;color:#444240;transform:scaleX(0.9300);">%</span><span class="t" style="left:655.69px;top:141.01px;font-size:19.6px;color:#aaa8a6;transform:scaleX(1.0921);">ab</span><span class="t" style="left:656.03px;top:154.01px;font-size:19.6px;color:#aaa8a6;transform:scaleX(0.9230);">c</span><span class="t" style="left:616px;top:246px;font-size:20px;color:#aaa8a6;transform:rotate(-45deg);transform-origin:0 50%;">ab</span><div class="b" style="left:16.2px;top:335.8px;width:306px;height:48.2px;background:#fff;border:1.5px solid #c6c6c6;box-sizing:border-box;"></div><div class="b" style="left:381.6px;top:335.8px;width:210.6px;height:48.2px;background:#fff;border:1.5px solid #c6c6c6;box-sizing:border-box;"></div><div class="b" style="left:598.5px;top:335.8px;width:240px;height:48.2px;background:#fff;border:1.5px solid #c6c6c6;box-sizing:border-box;"></div><span class="t" style="left:27.3px;top:348.98px;font-size:24.6px;color:#4a4a4a;transform:scaleX(0.9912);">PROMEDIO</span><span class="t" style="left:621.22px;top:349.04px;font-size:25px;color:#4a4a4a;transform:scaleX(0.9676);">=MAX(C2:C41)</span><span class="t" style="left:544.42px;top:344.19px;font-size:26px;color:#5f5f5f;transform:scaleX(1.6419);font-style:italic;font-family:'Liberation Serif',serif;">f</span><span class="t" style="left:555.1px;top:352.7px;font-size:17.6px;color:#5f5f5f;transform:scaleX(1.3978);font-weight:bold;font-style:italic;font-family:'Liberation Serif',serif;">x</span><svg class="b" style="left:0;top:0" width="824" height="430" viewBox="0 0 824 430"><g fill="none" stroke="#e3f1e9" stroke-width="2.6" stroke-linejoin="round"><path d="M46.6,26 H75 V54 H50.8 L46.6,49.8 Z"/><path d="M51.6,26 V38 H69.4 V26"/><path d="M52.9,54 V45 H68.2 V54"/></g><g fill="none" stroke="#5c9e7a" stroke-width="2.5"><path d="M104.2,25 V37.2 H116.3"/><path d="M104.6,36.8 C108.5,30.2 113.5,26.6 119,26.6 C125.3,26.6 129.8,31 129.8,36.4 C129.8,42.2 125,45.6 113,55.2"/></g><polyline points="143,34.3 148.5,39.9 154,34.3" fill="none" stroke="#5c9e7a" stroke-width="2.6"/><g transform="translate(75,0)"><g fill="none" stroke="#5c9e7a" stroke-width="2.5" transform="translate(234,0) scale(-1,1)"><path d="M104.2,25 V37.2 H116.3"/><path d="M104.6,36.8 C108.5,30.2 113.5,26.6 119,26.6 C125.3,26.6 129.8,31 129.8,36.4 C129.8,42.2 125,45.6 113,55.2"/></g></g><polyline points="218,34.3 223.5,39.9 229,34.3" fill="none" stroke="#5c9e7a" stroke-width="2.6"/><g fill="none" stroke="#5c9e7a" stroke-width="2.4"><rect x="252.3" y="26" width="28.6" height="28.2"/><path d="M261.8,26 V45 M272,26 V54.2 M252.3,35.5 H272 M252.3,45 H280.9"/></g><path d="M314.3,33.3 H328.6" stroke="#e3f1e9" stroke-width="2.2" fill="none"/><polyline points="315.2,39 321.5,43.6 327.8,39" fill="none" stroke="#e3f1e9" stroke-width="2.8"/><rect x="41.5" y="152.7" width="37" height="44" fill="#ebeaea" stroke="#c3c1bf" stroke-width="2.6"/><rect x="43.9" y="155" width="32.2" height="39.5" fill="none" stroke="#e2e0de" stroke-width="1.6"/><path d="M49.5,158.2 V151.6 H54.4 C54.4,147.6 57.2,145.3 60,145.3 C62.8,145.3 65.6,147.6 65.6,151.6 H70.5 V158.2 Z" fill="#f5f4f3" stroke="#bdbbb9" stroke-width="2"/><rect x="66.2" y="168.3" width="24.4" height="32" fill="#f0efef" stroke="#b3b1af" stroke-width="2.2"/><polyline points="54.6,249.8 60.1,255.3 65.6,249.8" fill="none" stroke="#aaa8a6" stroke-width="2"/><g fill="none" stroke="#444240" stroke-width="2.4" stroke-linecap="round"><path d="M118.3,143.2 L121.4,153 L127.8,166"/><path d="M127.4,143.2 L124.2,153 L117.8,166"/></g><circle cx="117.5" cy="169" r="3.3" fill="#bfe4f7" stroke="#2e9bd8" stroke-width="2"/><circle cx="128.1" cy="169" r="3.3" fill="#bfe4f7" stroke="#2e9bd8" stroke-width="2"/><g fill="none" stroke="#444240" stroke-width="2"><path d="M121,216 H108.7 V190 H118.5 L121.5,192.6"/><path d="M117.8,196.3 H129 L136.7,203.6 V217.8 H117.8 Z" fill="#fafafa"/><path d="M129,196.3 V203.6 H136.7"/><path d="M122.4,208.4 H131.8 M122.4,212.3 H131.8" stroke-width="1.5"/></g><polyline points="150.8,201.8 156.3,207.3 161.8,201.8" fill="none" stroke="#444240" stroke-width="2"/><g transform="translate(124.3,248.2) rotate(40) scale(0.87)"><rect x="-2.3" y="-19" width="4.6" height="12.5" rx="1.5" fill="#f0efee" stroke="#aaa8a6" stroke-width="1.8"/><rect x="-8.5" y="-6.6" width="17" height="4.4" fill="#f0efee" stroke="#aaa8a6" stroke-width="1.8"/><path d="M-8.5,-2 H8.5 L10.5,12.5 C6,15 2,11 -2,13.5 C-6,16 -9,13 -11.5,14 Z" fill="#e3e2e1" stroke="#b5b3b1" stroke-width="1.9" stroke-linejoin="round"/></g><polyline points="369.5,157.3 375.25,163.10000000000002 381.0,157.3" fill="none" stroke="#aaa8a6" stroke-width="2.1"/><polyline points="456.2,157.3 461.95,163.10000000000002 467.7,157.3" fill="none" stroke="#aaa8a6" stroke-width="2.1"/><path d="M312,214.3 H326.8" stroke="#aaa8a6" stroke-width="1.6"/><polyline points="347.3,201.8 352.8,207.3 358.3,201.8" fill="none" stroke="#aaa8a6" stroke-width="2.3"/><path d="M377.6,185.5 V224.5 M285.5,231.5 V270.5" stroke="#c8c6c4" stroke-width="1.4"/><polyline points="413.9,195.6 418.5,191 423.1,195.6" fill="none" stroke="#aaa8a6" stroke-width="1.8"/><polyline points="459.6,190.8 464.2,195.4 468.8,190.8" fill="none" stroke="#aaa8a6" stroke-width="1.8"/><g fill="#ecebea" stroke="#aaa8a6" stroke-width="2.2"><rect x="212.2" y="236" width="26.8" height="26.4"/><path d="M225.6,236 V262.4 M212.2,249.2 H239" fill="none"/></g><polyline points="255.2,247.8 260.7,253.3 266.2,247.8" fill="none" stroke="#aaa8a6" stroke-width="2.3"/><g fill="none" stroke="#aaa8a6" stroke-width="1.9" stroke-linejoin="round"><path d="M306.2,249.2 L314.8,239.6 L324.6,248.6 L313.4,257 Z"/><path d="M312.5,242.2 V237.6 C312.5,235 317.8,235 317.8,237.6 V242.4"/></g><path d="M324.2,243.2 C327.8,245.5 329.2,249.8 327.6,254.4 C326.4,251 325.6,249.6 323.2,247.8 Z" fill="#aaa8a6" stroke="#aaa8a6" stroke-width="1.2"/><rect x="300" y="258.3" width="30.3" height="6.3" fill="#aeacaa"/><polyline points="343.5,247.8 349.0,253.3 354.5,247.8" fill="none" stroke="#aaa8a6" stroke-width="2.3"/><rect x="374.8" y="257.6" width="30.6" height="7" fill="#aeacaa"/><polyline points="418.2,247.8 423.7,253.3 429.2,247.8" fill="none" stroke="#aaa8a6" stroke-width="2.3"/><path d="M513.7,143.3 H540.6 M517.9000000000001,151 H536.1 M513.7,158.7 H540.6 M559.9,148.9 H586.8 M564.1,156.6 H582.3 M559.9,164.3 H586.8 M606.1,156.6 H633.0 M610.3000000000001,164.3 H628.5 M606.1,172 H633.0 M513.7,191.3 H540.6 M513.7,199 H532.6 M513.7,206.7 H540.6 M513.7,214.4 H532.6 M559.9,191.3 H586.8 M564.1,199 H582.6 M559.9,206.7 H586.8 M564.1,214.4 H582.6 M606.1,191.3 H633 M614.1,199 H633 M606.1,206.7 H633 M614.1,214.4 H633 M513.7,237.5 H540.6 M529.1,245.2 H540.6 M529.1,252.9 H540.6 M513.7,260.6 H540.6 M559.9,237.5 H586.8 M575.3,245.2 H586.8 M575.3,252.9 H586.8 M559.9,260.6 H586.8 " stroke="#aaa8a6" stroke-width="2" fill="none"/><g fill="none" stroke="#aaa8a6" stroke-width="2"><path d="M514.6,249 H525.6 M519.2,244.3 L514.6,249 L519.2,253.7"/><path d="M560.3,249 H571.3 M566.7,244.3 L571.3,249 L566.7,253.7"/></g><path d="M603.3,231.5 V271.3" stroke="#c8c6c4" stroke-width="1.4"/><g fill="none" stroke="#aaa8a6" stroke-width="2" stroke-linejoin="round"><path d="M668,170.2 H677.6 C682.2,170.2 682.2,161.8 677.6,161.8 H675"/><path d="M672.6,165.4 L667.6,170.2 L672.6,175"/></g><g fill="none" stroke="#aaa8a6" stroke-width="2"><rect x="653.3" y="189.9" width="26.6" height="26.3"/><path d="M666.6,189.9 V195.6 M666.6,210.2 V216.2"/></g><path d="M653.3,195.6 H679.9 M653.3,210.2 H679.9" stroke="#aaa8a6" stroke-width="1.8" fill="none"/><g fill="none" stroke="#aaa8a6" stroke-width="1.8"><path d="M657.2,203 H676 M661,199.3 L657.2,203 L661,206.7 M672.2,199.3 L676,203 L672.2,206.7"/></g><polyline points="695.8,201.5 701.3,207.0 706.8,201.5" fill="none" stroke="#aaa8a6" stroke-width="2.3"/><g fill="none" stroke="#aaa8a6" stroke-width="1.9"><path d="M627.6,262.8 L647.4,243.2 M639.4,242.6 H648 V251.2"/></g><polyline points="657.3,247.6 662.8,253.1 668.3,247.6" fill="none" stroke="#aaa8a6" stroke-width="2.3"/><g fill="none" stroke="#484644" stroke-width="2.1"><path d="M168.20000000000002,302.4 V292.2 H178.4"/><path d="M172.4,296.4 L181.4,305.4 M181.6,298.9 V305.59999999999997 H174.9"/></g><g fill="none" stroke="#aaa8a6" stroke-width="2.1"><path d="M468.40000000000003,302.4 V292.2 H478.6"/><path d="M472.6,296.4 L481.6,305.4 M481.8,298.9 V305.59999999999997 H475.1"/></g><g fill="none" stroke="#aaa8a6" stroke-width="2.1"><path d="M713.0,302.0 V291.8 H723.2"/><path d="M717.2,296.0 L726.2,305.0 M726.4000000000001,298.5 V305.2 H719.7"/></g><polyline points="786.4,245.6 792.1,251.4 797.8,245.6" fill="none" stroke="#444240" stroke-width="2.2"/><path d="M295.7,354.4 H309.5 L302.6,361.8 Z" fill="#777"/><rect x="351" y="350.0" width="2.4" height="2.4" fill="#9a9a9a"/><rect x="351" y="358.5" width="2.4" height="2.4" fill="#9a9a9a"/><rect x="351" y="367.0" width="2.4" height="2.4" fill="#9a9a9a"/><path d="M407.5,351.4 L426.8,369 M426.8,351.4 L407.5,369" stroke="#5f5f5f" stroke-width="2.7" fill="none"/><path d="M476.3,361.3 L484.6,369.4 L499.6,350.4" stroke="#5f5f5f" stroke-width="3.4" fill="none" stroke-linejoin="miter"/></svg><div class="b" style="left:0;top:428.2px;width:824px;height:1129.8px;overflow:hidden;background:#fff"><div class="b" style="left:0px;top:0px;width:56.4px;height:1129.8px;background:#e6e6e6;"></div><div class="b" style="left:118px;top:0px;width:152px;height:26.98px;background:#d9e1f2;"></div><div class="b" style="left:270px;top:0px;width:108px;height:26.98px;background:#e2efda;"></div><div class="b" style="left:378px;top:0px;width:119px;height:26.98px;background:#fff2cc;"></div><div class="b" style="left:270px;top:26.98px;width:108px;height:1079px;background:#e8ecf7;"></div><div class="b" style="left:56px;top:26.18px;width:824px;height:1.6px;background:#d9d9d9;"></div><div class="b" style="left:5px;top:26.18px;width:51px;height:1.6px;background:#b4b4b4;"></div><div class="b" style="left:56px;top:53.15px;width:824px;height:1.6px;background:#d9d9d9;"></div><div class="b" style="left:5px;top:53.15px;width:51px;height:1.6px;background:#b4b4b4;"></div><div class="b" style="left:56px;top:80.13px;width:824px;height:1.6px;background:#d9d9d9;"></div><div class="b" style="left:5px;top:80.13px;width:51px;height:1.6px;background:#b4b4b4;"></div><div class="b" style="left:56px;top:107.1px;width:824px;height:1.6px;background:#d9d9d9;"></div><div class="b" style="left:5px;top:107.1px;width:51px;height:1.6px;background:#b4b4b4;"></div><div class="b" style="left:56px;top:134.07px;width:824px;height:1.6px;background:#d9d9d9;"></div><div class="b" style="left:5px;top:134.07px;width:51px;height:1.6px;background:#b4b4b4;"></div><div class="b" style="left:56px;top:161.05px;width:824px;height:1.6px;background:#d9d9d9;"></div><div class="b" style="left:5px;top:161.05px;width:51px;height:1.6px;background:#b4b4b4;"></div><div class="b" style="left:56px;top:188.03px;width:824px;height:1.6px;background:#d9d9d9;"></div><div class="b" style="left:5px;top:188.03px;width:51px;height:1.6px;background:#b4b4b4;"></div><div class="b" style="left:56px;top:215px;width:824px;height:1.6px;background:#d9d9d9;"></div><div class="b" style="left:5px;top:215px;width:51px;height:1.6px;background:#b4b4b4;"></div><div class="b" style="left:56px;top:241.97px;width:824px;height:1.6px;background:#d9d9d9;"></div><div class="b" style="left:5px;top:241.97px;width:51px;height:1.6px;background:#b4b4b4;"></div><div class="b" style="left:56px;top:268.95px;width:824px;height:1.6px;background:#d9d9d9;"></div><div class="b" style="left:5px;top:268.95px;width:51px;height:1.6px;background:#b4b4b4;"></div><div class="b" style="left:56px;top:295.93px;width:824px;height:1.6px;background:#d9d9d9;"></div><div class="b" style="left:5px;top:295.93px;width:51px;height:1.6px;background:#b4b4b4;"></div><div class="b" style="left:56px;top:322.9px;width:824px;height:1.6px;background:#d9d9d9;"></div><div class="b" style="left:5px;top:322.9px;width:51px;height:1.6px;background:#b4b4b4;"></div><div class="b" style="left:56px;top:349.88px;width:824px;height:1.6px;background:#d9d9d9;"></div><div class="b" style="left:5px;top:349.88px;width:51px;height:1.6px;background:#b4b4b4;"></div><div class="b" style="left:56px;top:376.85px;width:824px;height:1.6px;background:#d9d9d9;"></div><div class="b" style="left:5px;top:376.85px;width:51px;height:1.6px;background:#b4b4b4;"></div><div class="b" style="left:56px;top:403.82px;width:824px;height:1.6px;background:#d9d9d9;"></div><div class="b" style="left:5px;top:403.82px;width:51px;height:1.6px;background:#b4b4b4;"></div><div class="b" style="left:56px;top:430.8px;width:824px;height:1.6px;background:#d9d9d9;"></div><div class="b" style="left:5px;top:430.8px;width:51px;height:1.6px;background:#b4b4b4;"></div><div class="b" style="left:56px;top:457.78px;width:824px;height:1.6px;background:#d9d9d9;"></div><div class="b" style="left:5px;top:457.78px;width:51px;height:1.6px;background:#b4b4b4;"></div><div class="b" style="left:56px;top:484.75px;width:824px;height:1.6px;background:#d9d9d9;"></div><div class="b" style="left:5px;top:484.75px;width:51px;height:1.6px;background:#b4b4b4;"></div><div class="b" style="left:56px;top:511.72px;width:824px;height:1.6px;background:#d9d9d9;"></div><div class="b" style="left:5px;top:511.72px;width:51px;height:1.6px;background:#b4b4b4;"></div><div class="b" style="left:56px;top:538.7px;width:824px;height:1.6px;background:#d9d9d9;"></div><div class="b" style="left:5px;top:538.7px;width:51px;height:1.6px;background:#b4b4b4;"></div><div class="b" style="left:56px;top:565.68px;width:824px;height:1.6px;background:#d9d9d9;"></div><div class="b" style="left:5px;top:565.68px;width:51px;height:1.6px;background:#b4b4b4;"></div><div class="b" style="left:56px;top:592.65px;width:824px;height:1.6px;background:#d9d9d9;"></div><div class="b" style="left:5px;top:592.65px;width:51px;height:1.6px;background:#b4b4b4;"></div><div class="b" style="left:56px;top:619.63px;width:824px;height:1.6px;background:#d9d9d9;"></div><div class="b" style="left:5px;top:619.63px;width:51px;height:1.6px;background:#b4b4b4;"></div><div class="b" style="left:56px;top:646.6px;width:824px;height:1.6px;background:#d9d9d9;"></div><div class="b" style="left:5px;top:646.6px;width:51px;height:1.6px;background:#b4b4b4;"></div><div class="b" style="left:56px;top:673.58px;width:824px;height:1.6px;background:#d9d9d9;"></div><div class="b" style="left:5px;top:673.58px;width:51px;height:1.6px;background:#b4b4b4;"></div><div class="b" style="left:56px;top:700.55px;width:824px;height:1.6px;background:#d9d9d9;"></div><div class="b" style="left:5px;top:700.55px;width:51px;height:1.6px;background:#b4b4b4;"></div><div class="b" style="left:56px;top:727.53px;width:824px;height:1.6px;background:#d9d9d9;"></div><div class="b" style="left:5px;top:727.53px;width:51px;height:1.6px;background:#b4b4b4;"></div><div class="b" style="left:56px;top:754.5px;width:824px;height:1.6px;background:#d9d9d9;"></div><div class="b" style="left:5px;top:754.5px;width:51px;height:1.6px;background:#b4b4b4;"></div><div class="b" style="left:56px;top:781.48px;width:824px;height:1.6px;background:#d9d9d9;"></div><div class="b" style="left:5px;top:781.48px;width:51px;height:1.6px;background:#b4b4b4;"></div><div class="b" style="left:56px;top:808.45px;width:824px;height:1.6px;background:#d9d9d9;"></div><div class="b" style="left:5px;top:808.45px;width:51px;height:1.6px;background:#b4b4b4;"></div><div class="b" style="left:56px;top:835.43px;width:824px;height:1.6px;background:#d9d9d9;"></div><div class="b" style="left:5px;top:835.43px;width:51px;height:1.6px;background:#b4b4b4;"></div><div class="b" style="left:56px;top:862.4px;width:824px;height:1.6px;background:#d9d9d9;"></div><div class="b" style="left:5px;top:862.4px;width:51px;height:1.6px;background:#b4b4b4;"></div><div class="b" style="left:56px;top:889.38px;width:824px;height:1.6px;background:#d9d9d9;"></div><div class="b" style="left:5px;top:889.38px;width:51px;height:1.6px;background:#b4b4b4;"></div><div class="b" style="left:56px;top:916.35px;width:824px;height:1.6px;background:#d9d9d9;"></div><div class="b" style="left:5px;top:916.35px;width:51px;height:1.6px;background:#b4b4b4;"></div><div class="b" style="left:56px;top:943.33px;width:824px;height:1.6px;background:#d9d9d9;"></div><div class="b" style="left:5px;top:943.33px;width:51px;height:1.6px;background:#b4b4b4;"></div><div class="b" style="left:56px;top:970.3px;width:824px;height:1.6px;background:#d9d9d9;"></div><div class="b" style="left:5px;top:970.3px;width:51px;height:1.6px;background:#b4b4b4;"></div><div class="b" style="left:56px;top:997.28px;width:824px;height:1.6px;background:#d9d9d9;"></div><div class="b" style="left:5px;top:997.28px;width:51px;height:1.6px;background:#b4b4b4;"></div><div class="b" style="left:56px;top:1024.25px;width:824px;height:1.6px;background:#d9d9d9;"></div><div class="b" style="left:5px;top:1024.25px;width:51px;height:1.6px;background:#b4b4b4;"></div><div class="b" style="left:56px;top:1051.23px;width:824px;height:1.6px;background:#d9d9d9;"></div><div class="b" style="left:5px;top:1051.23px;width:51px;height:1.6px;background:#b4b4b4;"></div><div class="b" style="left:56px;top:1078.2px;width:824px;height:1.6px;background:#d9d9d9;"></div><div class="b" style="left:5px;top:1078.2px;width:51px;height:1.6px;background:#b4b4b4;"></div><div class="b" style="left:56px;top:1105.18px;width:824px;height:1.6px;background:#d9d9d9;"></div><div class="b" style="left:5px;top:1105.18px;width:51px;height:1.6px;background:#b4b4b4;"></div><div class="b" style="left:56px;top:1132.15px;width:824px;height:1.6px;background:#d9d9d9;"></div><div class="b" style="left:5px;top:1132.15px;width:51px;height:1.6px;background:#b4b4b4;"></div><div class="b" style="left:117.2px;top:0px;width:1.6px;height:1129.8px;background:#d9d9d9;"></div><div class="b" style="left:269.2px;top:0px;width:1.6px;height:1129.8px;background:#d9d9d9;"></div><div class="b" style="left:377.2px;top:0px;width:1.6px;height:1129.8px;background:#d9d9d9;"></div><div class="b" style="left:496.2px;top:0px;width:1.6px;height:1129.8px;background:#d9d9d9;"></div><div class="b" style="left:604.2px;top:0px;width:1.6px;height:1129.8px;background:#d9d9d9;"></div><div class="b" style="left:712.2px;top:0px;width:1.6px;height:1129.8px;background:#d9d9d9;"></div><div class="b" style="left:55.8px;top:0px;width:1.5px;height:1129.8px;background:#a6a6a6;"></div><div class="b" style="left:5px;top:162.65px;width:51px;height:25.38px;background:#d2d2d2;"></div><div class="b" style="left:54.2px;top:161.45px;width:2.8px;height:27.78px;background:#217346;"></div><span class="t" style="left:27.45px;top:4.92px;font-size:18.4px;color:#262626;transform:scaleX(0.5672);-webkit-text-stroke:0.4px #262626;">1</span><span class="t" style="left:27.07px;top:31.9px;font-size:18.4px;color:#262626;-webkit-text-stroke:0.4px #262626;">2</span><span class="t" style="left:27.33px;top:58.87px;font-size:18.4px;color:#262626;transform:scaleX(0.9629);-webkit-text-stroke:0.4px #262626;">3</span><span class="t" style="left:27.62px;top:85.85px;font-size:18.4px;color:#262626;transform:scaleX(0.9060);-webkit-text-stroke:0.4px #262626;">4</span><span class="t" style="left:27.29px;top:112.82px;font-size:18.4px;color:#262626;transform:scaleX(0.9629);-webkit-text-stroke:0.4px #262626;">5</span><span class="t" style="left:27.08px;top:139.8px;font-size:18.4px;color:#262626;transform:scaleX(0.9894);-webkit-text-stroke:0.4px #262626;">6</span><span class="t" style="left:27.05px;top:166.77px;font-size:18.4px;color:#217346;transform:scaleX(1.0042);-webkit-text-stroke:0.4px #217346;">7</span><span class="t" style="left:27.22px;top:193.75px;font-size:18.4px;color:#262626;transform:scaleX(0.9729);-webkit-text-stroke:0.4px #262626;">8</span><span class="t" style="left:27.15px;top:220.72px;font-size:18.4px;color:#262626;transform:scaleX(0.9883);-webkit-text-stroke:0.4px #262626;">9</span><span class="t" style="left:22.05px;top:247.7px;font-size:18.4px;color:#262626;transform:scaleX(0.7522);-webkit-text-stroke:0.4px #262626;">10</span><span class="t" style="left:22.69px;top:274.67px;font-size:18.4px;color:#262626;transform:scaleX(0.5450);-webkit-text-stroke:0.4px #262626;">11</span><span class="t" style="left:22.03px;top:301.65px;font-size:18.4px;color:#262626;transform:scaleX(0.7608);-webkit-text-stroke:0.4px #262626;">12</span><span class="t" style="left:22.04px;top:328.62px;font-size:18.4px;color:#262626;transform:scaleX(0.7559);-webkit-text-stroke:0.4px #262626;">13</span><span class="t" style="left:22.06px;top:355.6px;font-size:18.4px;color:#262626;transform:scaleX(0.7449);-webkit-text-stroke:0.4px #262626;">14</span><span class="t" style="left:22.04px;top:382.57px;font-size:18.4px;color:#262626;transform:scaleX(0.7544);-webkit-text-stroke:0.4px #262626;">15</span><span class="t" style="left:22.04px;top:409.55px;font-size:18.4px;color:#262626;transform:scaleX(0.7559);-webkit-text-stroke:0.4px #262626;">16</span><span class="t" style="left:22.03px;top:436.52px;font-size:18.4px;color:#262626;transform:scaleX(0.7608);-webkit-text-stroke:0.4px #262626;">17</span><span class="t" style="left:22.04px;top:463.5px;font-size:18.4px;color:#262626;transform:scaleX(0.7555);-webkit-text-stroke:0.4px #262626;">18</span><span class="t" style="left:22.04px;top:490.47px;font-size:18.4px;color:#262626;transform:scaleX(0.7585);-webkit-text-stroke:0.4px #262626;">19</span><span class="t" style="left:21.58px;top:517.45px;font-size:18.4px;color:#262626;transform:scaleX(0.9404);-webkit-text-stroke:0.4px #262626;">20</span><span class="t" style="left:22.41px;top:544.42px;font-size:18.4px;color:#262626;transform:scaleX(0.7402);-webkit-text-stroke:0.4px #262626;">21</span><span class="t" style="left:21.57px;top:571.4px;font-size:18.4px;color:#262626;transform:scaleX(0.9508);-webkit-text-stroke:0.4px #262626;">22</span><span class="t" style="left:21.58px;top:598.37px;font-size:18.4px;color:#262626;transform:scaleX(0.9449);-webkit-text-stroke:0.4px #262626;">23</span><span class="t" style="left:21.59px;top:625.35px;font-size:18.4px;color:#262626;transform:scaleX(0.9315);-webkit-text-stroke:0.4px #262626;">24</span><span class="t" style="left:21.58px;top:652.32px;font-size:18.4px;color:#262626;transform:scaleX(0.9431);-webkit-text-stroke:0.4px #262626;">25</span><span class="t" style="left:21.58px;top:679.3px;font-size:18.4px;color:#262626;transform:scaleX(0.9449);-webkit-text-stroke:0.4px #262626;">26</span><span class="t" style="left:21.57px;top:706.27px;font-size:18.4px;color:#262626;transform:scaleX(0.9508);-webkit-text-stroke:0.4px #262626;">27</span><span class="t" style="left:21.58px;top:733.25px;font-size:18.4px;color:#262626;transform:scaleX(0.9444);-webkit-text-stroke:0.4px #262626;">28</span><span class="t" style="left:21.57px;top:760.22px;font-size:18.4px;color:#262626;transform:scaleX(0.9481);-webkit-text-stroke:0.4px #262626;">29</span><span class="t" style="left:21.8px;top:787.2px;font-size:18.4px;color:#262626;transform:scaleX(0.9293);-webkit-text-stroke:0.4px #262626;">30</span><span class="t" style="left:22.59px;top:814.17px;font-size:18.4px;color:#262626;transform:scaleX(0.7314);-webkit-text-stroke:0.4px #262626;">31</span><span class="t" style="left:21.79px;top:841.15px;font-size:18.4px;color:#262626;transform:scaleX(0.9395);-webkit-text-stroke:0.4px #262626;">32</span><span class="t" style="left:21.8px;top:868.12px;font-size:18.4px;color:#262626;transform:scaleX(0.9337);-webkit-text-stroke:0.4px #262626;">33</span><span class="t" style="left:21.8px;top:895.1px;font-size:18.4px;color:#262626;transform:scaleX(0.9206);-webkit-text-stroke:0.4px #262626;">34</span><span class="t" style="left:21.8px;top:922.07px;font-size:18.4px;color:#262626;transform:scaleX(0.9319);-webkit-text-stroke:0.4px #262626;">35</span><span class="t" style="left:21.8px;top:949.05px;font-size:18.4px;color:#262626;transform:scaleX(0.9337);-webkit-text-stroke:0.4px #262626;">36</span><span class="t" style="left:21.79px;top:976.02px;font-size:18.4px;color:#262626;transform:scaleX(0.9395);-webkit-text-stroke:0.4px #262626;">37</span><span class="t" style="left:21.8px;top:1003px;font-size:18.4px;color:#262626;transform:scaleX(0.9332);-webkit-text-stroke:0.4px #262626;">38</span><span class="t" style="left:21.79px;top:1029.97px;font-size:18.4px;color:#262626;transform:scaleX(0.9368);-webkit-text-stroke:0.4px #262626;">39</span><span class="t" style="left:22.06px;top:1056.95px;font-size:18.4px;color:#262626;transform:scaleX(0.9159);-webkit-text-stroke:0.4px #262626;">40</span><span class="t" style="left:22.8px;top:1083.92px;font-size:18.4px;color:#262626;transform:scaleX(0.7208);-webkit-text-stroke:0.4px #262626;">41</span><span class="t" style="left:22.06px;top:1110.9px;font-size:18.4px;color:#262626;transform:scaleX(0.9258);-webkit-text-stroke:0.4px #262626;">42</span><span class="t" style="left:22.06px;top:1137.87px;font-size:18.4px;color:#262626;transform:scaleX(0.9202);-webkit-text-stroke:0.4px #262626;">43</span><div class="b" style="left:117.4px;top:0px;width:2px;height:1106.98px;background:#111;"></div><div class="b" style="left:269px;top:0px;width:2px;height:26.98px;background:#111;"></div><div class="b" style="left:377px;top:0px;width:2px;height:26.98px;background:#111;"></div><div class="b" style="left:378px;top:26.98px;width:0px;height:297.73px;background:#111;"></div><div class="b" style="left:496px;top:0px;width:2px;height:324.7px;background:#111;"></div><div class="b" style="left:117.4px;top:25.98px;width:153.6px;height:2px;background:#111;"></div><div class="b" style="left:270px;top:25.98px;width:109px;height:2px;background:#111;"></div><div class="b" style="left:379px;top:25.98px;width:119px;height:2px;background:#111;"></div><div class="b" style="left:117.4px;top:52.95px;width:152.6px;height:2px;background:#111;"></div><div class="b" style="left:273.6px;top:52.95px;width:101px;height:2px;background:#111;"></div><div class="b" style="left:381px;top:52.95px;width:117px;height:2px;background:#111;"></div><div class="b" style="left:117.4px;top:79.93px;width:152.6px;height:2px;background:#111;"></div><div class="b" style="left:273.6px;top:79.93px;width:101px;height:2px;background:#111;"></div><div class="b" style="left:381px;top:79.93px;width:117px;height:2px;background:#111;"></div><div class="b" style="left:117.4px;top:106.9px;width:152.6px;height:2px;background:#111;"></div><div class="b" style="left:273.6px;top:106.9px;width:101px;height:2px;background:#111;"></div><div class="b" style="left:381px;top:106.9px;width:117px;height:2px;background:#111;"></div><div class="b" style="left:117.4px;top:133.88px;width:152.6px;height:2px;background:#111;"></div><div class="b" style="left:273.6px;top:133.88px;width:101px;height:2px;background:#111;"></div><div class="b" style="left:381px;top:133.88px;width:117px;height:2px;background:#111;"></div><div class="b" style="left:117.4px;top:160.85px;width:152.6px;height:2px;background:#111;"></div><div class="b" style="left:273.6px;top:160.85px;width:101px;height:2px;background:#111;"></div><div class="b" style="left:381px;top:160.85px;width:117px;height:2px;background:#111;"></div><div class="b" style="left:117.4px;top:187.83px;width:152.6px;height:2px;background:#111;"></div><div class="b" style="left:273.6px;top:187.83px;width:101px;height:2px;background:#111;"></div><div class="b" style="left:381px;top:187.83px;width:117px;height:2px;background:#111;"></div><div class="b" style="left:117.4px;top:214.8px;width:152.6px;height:2px;background:#111;"></div><div class="b" style="left:273.6px;top:214.8px;width:101px;height:2px;background:#111;"></div><div class="b" style="left:381px;top:214.8px;width:117px;height:2px;background:#111;"></div><div class="b" style="left:117.4px;top:241.78px;width:152.6px;height:2px;background:#111;"></div><div class="b" style="left:273.6px;top:241.78px;width:101px;height:2px;background:#111;"></div><div class="b" style="left:381px;top:241.78px;width:117px;height:2px;background:#111;"></div><div class="b" style="left:117.4px;top:268.75px;width:152.6px;height:2px;background:#111;"></div><div class="b" style="left:273.6px;top:268.75px;width:101px;height:2px;background:#111;"></div><div class="b" style="left:381px;top:268.75px;width:117px;height:2px;background:#111;"></div><div class="b" style="left:117.4px;top:295.73px;width:152.6px;height:2px;background:#111;"></div><div class="b" style="left:273.6px;top:295.73px;width:101px;height:2px;background:#111;"></div><div class="b" style="left:381px;top:295.73px;width:117px;height:2px;background:#111;"></div><div class="b" style="left:117.4px;top:322.7px;width:152.6px;height:2px;background:#111;"></div><div class="b" style="left:273.6px;top:322.7px;width:101px;height:2px;background:#111;"></div><div class="b" style="left:381px;top:322.7px;width:117px;height:2px;background:#111;"></div><div class="b" style="left:117.4px;top:349.68px;width:152.6px;height:2px;background:#111;"></div><div class="b" style="left:273.6px;top:349.68px;width:101px;height:2px;background:#111;"></div><div class="b" style="left:117.4px;top:376.65px;width:152.6px;height:2px;background:#111;"></div><div class="b" style="left:273.6px;top:376.65px;width:101px;height:2px;background:#111;"></div><div class="b" style="left:117.4px;top:403.62px;width:152.6px;height:2px;background:#111;"></div><div class="b" style="left:273.6px;top:403.62px;width:101px;height:2px;background:#111;"></div><div class="b" style="left:117.4px;top:430.6px;width:152.6px;height:2px;background:#111;"></div><div class="b" style="left:273.6px;top:430.6px;width:101px;height:2px;background:#111;"></div><div class="b" style="left:117.4px;top:457.58px;width:152.6px;height:2px;background:#111;"></div><div class="b" style="left:273.6px;top:457.58px;width:101px;height:2px;background:#111;"></div><div class="b" style="left:117.4px;top:484.55px;width:152.6px;height:2px;background:#111;"></div><div class="b" style="left:273.6px;top:484.55px;width:101px;height:2px;background:#111;"></div><div class="b" style="left:117.4px;top:511.52px;width:152.6px;height:2px;background:#111;"></div><div class="b" style="left:273.6px;top:511.52px;width:101px;height:2px;background:#111;"></div><div class="b" style="left:117.4px;top:538.5px;width:152.6px;height:2px;background:#111;"></div><div class="b" style="left:273.6px;top:538.5px;width:101px;height:2px;background:#111;"></div><div class="b" style="left:117.4px;top:565.48px;width:152.6px;height:2px;background:#111;"></div><div class="b" style="left:273.6px;top:565.48px;width:101px;height:2px;background:#111;"></div><div class="b" style="left:117.4px;top:592.45px;width:152.6px;height:2px;background:#111;"></div><div class="b" style="left:273.6px;top:592.45px;width:101px;height:2px;background:#111;"></div><div class="b" style="left:117.4px;top:619.43px;width:152.6px;height:2px;background:#111;"></div><div class="b" style="left:273.6px;top:619.43px;width:101px;height:2px;background:#111;"></div><div class="b" style="left:117.4px;top:646.4px;width:152.6px;height:2px;background:#111;"></div><div class="b" style="left:273.6px;top:646.4px;width:101px;height:2px;background:#111;"></div><div class="b" style="left:117.4px;top:673.38px;width:152.6px;height:2px;background:#111;"></div><div class="b" style="left:273.6px;top:673.38px;width:101px;height:2px;background:#111;"></div><div class="b" style="left:117.4px;top:700.35px;width:152.6px;height:2px;background:#111;"></div><div class="b" style="left:273.6px;top:700.35px;width:101px;height:2px;background:#111;"></div><div class="b" style="left:117.4px;top:727.33px;width:152.6px;height:2px;background:#111;"></div><div class="b" style="left:273.6px;top:727.33px;width:101px;height:2px;background:#111;"></div><div class="b" style="left:117.4px;top:754.3px;width:152.6px;height:2px;background:#111;"></div><div class="b" style="left:273.6px;top:754.3px;width:101px;height:2px;background:#111;"></div><div class="b" style="left:117.4px;top:781.28px;width:152.6px;height:2px;background:#111;"></div><div class="b" style="left:273.6px;top:781.28px;width:101px;height:2px;background:#111;"></div><div class="b" style="left:117.4px;top:808.25px;width:152.6px;height:2px;background:#111;"></div><div class="b" style="left:273.6px;top:808.25px;width:101px;height:2px;background:#111;"></div><div class="b" style="left:117.4px;top:835.23px;width:152.6px;height:2px;background:#111;"></div><div class="b" style="left:273.6px;top:835.23px;width:101px;height:2px;background:#111;"></div><div class="b" style="left:117.4px;top:862.2px;width:152.6px;height:2px;background:#111;"></div><div class="b" style="left:273.6px;top:862.2px;width:101px;height:2px;background:#111;"></div><div class="b" style="left:117.4px;top:889.18px;width:152.6px;height:2px;background:#111;"></div><div class="b" style="left:273.6px;top:889.18px;width:101px;height:2px;background:#111;"></div><div class="b" style="left:117.4px;top:916.15px;width:152.6px;height:2px;background:#111;"></div><div class="b" style="left:273.6px;top:916.15px;width:101px;height:2px;background:#111;"></div><div class="b" style="left:117.4px;top:943.12px;width:152.6px;height:2px;background:#111;"></div><div class="b" style="left:273.6px;top:943.12px;width:101px;height:2px;background:#111;"></div><div class="b" style="left:117.4px;top:970.1px;width:152.6px;height:2px;background:#111;"></div><div class="b" style="left:273.6px;top:970.1px;width:101px;height:2px;background:#111;"></div><div class="b" style="left:117.4px;top:997.08px;width:152.6px;height:2px;background:#111;"></div><div class="b" style="left:273.6px;top:997.08px;width:101px;height:2px;background:#111;"></div><div class="b" style="left:117.4px;top:1024.05px;width:152.6px;height:2px;background:#111;"></div><div class="b" style="left:273.6px;top:1024.05px;width:101px;height:2px;background:#111;"></div><div class="b" style="left:117.4px;top:1051.03px;width:152.6px;height:2px;background:#111;"></div><div class="b" style="left:273.6px;top:1051.03px;width:101px;height:2px;background:#111;"></div><div class="b" style="left:117.4px;top:1078px;width:152.6px;height:2px;background:#111;"></div><div class="b" style="left:273.6px;top:1078px;width:101px;height:2px;background:#111;"></div><div class="b" style="left:117.4px;top:1104.98px;width:152.6px;height:2px;background:#111;"></div><div class="b" style="left:273.6px;top:1104.98px;width:101px;height:2px;background:#111;"></div><span class="t" style="left:123.56px;top:2.97px;font-size:20px;color:#000;">Nombre</span><span class="t" style="left:274.76px;top:2.97px;font-size:20px;color:#000;">Edad</span><span class="t" style="left:407.73px;top:2.97px;font-size:20px;color:#000;">Rango</span><span class="t" style="left:123.66px;top:29.95px;font-size:20px;color:#000;">Encuestado 1</span><span class="t" style="left:352.03px;top:29.95px;font-size:20px;color:#000;">26</span><span class="t" style="left:470.99px;top:29.95px;font-size:20px;color:#000;">25</span><span class="t" style="left:123.66px;top:56.92px;font-size:20px;color:#000;">Encuestado 2</span><span class="t" style="left:351.94px;top:56.92px;font-size:20px;color:#000;">30</span><span class="t" style="left:471.03px;top:56.92px;font-size:20px;color:#000;">26</span><span class="t" style="left:123.66px;top:83.9px;font-size:20px;color:#000;">Encuestado 3</span><span class="t" style="left:352.16px;top:83.9px;font-size:20px;color:#000;">32</span><span class="t" style="left:471.16px;top:83.9px;font-size:20px;color:#000;">27</span><span class="t" style="left:123.66px;top:110.87px;font-size:20px;color:#000;">Encuestado 4</span><span class="t" style="left:351.74px;top:110.87px;font-size:20px;color:#000;">34</span><span class="t" style="left:471.02px;top:110.87px;font-size:20px;color:#000;">28</span><span class="t" style="left:123.66px;top:137.84px;font-size:20px;color:#000;">Encuestado 5</span><span class="t" style="left:352.02px;top:137.84px;font-size:20px;color:#000;">28</span><span class="t" style="left:471.1px;top:137.84px;font-size:20px;color:#000;">29</span><span class="t" style="left:123.66px;top:164.82px;font-size:20px;color:#000;">Encuestado 6</span><span class="t" style="left:352.16px;top:164.82px;font-size:20px;color:#000;">27</span><span class="t" style="left:470.94px;top:164.82px;font-size:20px;color:#000;">30</span><span class="t" style="left:123.66px;top:191.8px;font-size:20px;color:#000;">Encuestado 7</span><span class="t" style="left:351.99px;top:191.8px;font-size:20px;color:#000;">25</span><span class="t" style="left:471.13px;top:191.8px;font-size:20px;color:#000;">31</span><span class="t" style="left:123.66px;top:218.77px;font-size:20px;color:#000;">Encuestado 8</span><span class="t" style="left:351.99px;top:218.77px;font-size:20px;color:#000;">25</span><span class="t" style="left:471.16px;top:218.77px;font-size:20px;color:#000;">32</span><span class="t" style="left:123.66px;top:245.75px;font-size:20px;color:#000;">Encuestado 9</span><span class="t" style="left:352.16px;top:245.75px;font-size:20px;color:#000;">27</span><span class="t" style="left:471.03px;top:245.75px;font-size:20px;color:#000;">33</span><span class="t" style="left:123.69px;top:272.72px;font-size:20px;color:#000;transform:scaleX(0.9840);">Encuestado 10</span><span class="t" style="left:352.1px;top:272.72px;font-size:20px;color:#000;">29</span><span class="t" style="left:470.74px;top:272.72px;font-size:20px;color:#000;">34</span><span class="t" style="left:123.71px;top:299.69px;font-size:20px;color:#000;transform:scaleX(0.9720);">Encuestado 11</span><span class="t" style="left:352.13px;top:299.69px;font-size:20px;color:#000;">31</span><span class="t" style="left:470.99px;top:299.69px;font-size:20px;color:#000;">35</span><span class="t" style="left:123.69px;top:326.67px;font-size:20px;color:#000;transform:scaleX(0.9840);">Encuestado 12</span><span class="t" style="left:351.94px;top:326.67px;font-size:20px;color:#000;">30</span><span class="t" style="left:123.69px;top:353.64px;font-size:20px;color:#000;transform:scaleX(0.9840);">Encuestado 13</span><span class="t" style="left:352.02px;top:353.64px;font-size:20px;color:#000;">28</span><span class="t" style="left:123.69px;top:380.62px;font-size:20px;color:#000;transform:scaleX(0.9840);">Encuestado 14</span><span class="t" style="left:351.94px;top:380.62px;font-size:20px;color:#000;">30</span><span class="t" style="left:123.69px;top:407.59px;font-size:20px;color:#000;transform:scaleX(0.9840);">Encuestado 15</span><span class="t" style="left:352.1px;top:407.59px;font-size:20px;color:#000;">29</span><span class="t" style="left:123.69px;top:434.57px;font-size:20px;color:#000;transform:scaleX(0.9840);">Encuestado 16</span><span class="t" style="left:352.03px;top:434.57px;font-size:20px;color:#000;">33</span><span class="t" style="left:123.69px;top:461.55px;font-size:20px;color:#000;transform:scaleX(0.9840);">Encuestado 17</span><span class="t" style="left:351.99px;top:461.55px;font-size:20px;color:#000;">35</span><span class="t" style="left:123.69px;top:488.52px;font-size:20px;color:#000;transform:scaleX(0.9840);">Encuestado 18</span><span class="t" style="left:352.03px;top:488.52px;font-size:20px;color:#000;">26</span><span class="t" style="left:123.69px;top:515.5px;font-size:20px;color:#000;transform:scaleX(0.9840);">Encuestado 19</span><span class="t" style="left:352.02px;top:515.5px;font-size:20px;color:#000;">28</span><span class="t" style="left:123.66px;top:542.47px;font-size:20px;color:#000;">Encuestado 20</span><span class="t" style="left:351.99px;top:542.47px;font-size:20px;color:#000;">25</span><span class="t" style="left:123.68px;top:569.45px;font-size:20px;color:#000;transform:scaleX(0.9870);">Encuestado 21</span><span class="t" style="left:352.03px;top:569.45px;font-size:20px;color:#000;">26</span><span class="t" style="left:123.66px;top:596.42px;font-size:20px;color:#000;">Encuestado 22</span><span class="t" style="left:351.94px;top:596.42px;font-size:20px;color:#000;">30</span><span class="t" style="left:123.66px;top:623.4px;font-size:20px;color:#000;">Encuestado 23</span><span class="t" style="left:352.16px;top:623.4px;font-size:20px;color:#000;">32</span><span class="t" style="left:123.66px;top:650.37px;font-size:20px;color:#000;">Encuestado 24</span><span class="t" style="left:351.99px;top:650.37px;font-size:20px;color:#000;">35</span><span class="t" style="left:123.66px;top:677.35px;font-size:20px;color:#000;">Encuestado 25</span><span class="t" style="left:352.02px;top:677.35px;font-size:20px;color:#000;">28</span><span class="t" style="left:123.66px;top:704.32px;font-size:20px;color:#000;">Encuestado 26</span><span class="t" style="left:352.16px;top:704.32px;font-size:20px;color:#000;">27</span><span class="t" style="left:123.66px;top:731.3px;font-size:20px;color:#000;">Encuestado 27</span><span class="t" style="left:351.99px;top:731.3px;font-size:20px;color:#000;">25</span><span class="t" style="left:123.66px;top:758.27px;font-size:20px;color:#000;">Encuestado 28</span><span class="t" style="left:351.99px;top:758.27px;font-size:20px;color:#000;">25</span><span class="t" style="left:123.66px;top:785.25px;font-size:20px;color:#000;">Encuestado 29</span><span class="t" style="left:352.16px;top:785.25px;font-size:20px;color:#000;">27</span><span class="t" style="left:123.66px;top:812.22px;font-size:20px;color:#000;">Encuestado 30</span><span class="t" style="left:352.1px;top:812.22px;font-size:20px;color:#000;">29</span><span class="t" style="left:123.68px;top:839.2px;font-size:20px;color:#000;transform:scaleX(0.9870);">Encuestado 31</span><span class="t" style="left:352.13px;top:839.2px;font-size:20px;color:#000;">31</span><span class="t" style="left:123.66px;top:866.17px;font-size:20px;color:#000;">Encuestado 32</span><span class="t" style="left:351.94px;top:866.17px;font-size:20px;color:#000;">30</span><span class="t" style="left:123.66px;top:893.15px;font-size:20px;color:#000;">Encuestado 33</span><span class="t" style="left:352.02px;top:893.15px;font-size:20px;color:#000;">28</span><span class="t" style="left:123.66px;top:920.12px;font-size:20px;color:#000;">Encuestado 34</span><span class="t" style="left:351.94px;top:920.12px;font-size:20px;color:#000;">30</span><span class="t" style="left:123.66px;top:947.1px;font-size:20px;color:#000;">Encuestado 35</span><span class="t" style="left:352.1px;top:947.1px;font-size:20px;color:#000;">29</span><span class="t" style="left:123.66px;top:974.07px;font-size:20px;color:#000;">Encuestado 36</span><span class="t" style="left:352.03px;top:974.07px;font-size:20px;color:#000;">33</span><span class="t" style="left:123.66px;top:1001.05px;font-size:20px;color:#000;">Encuestado 37</span><span class="t" style="left:351.99px;top:1001.05px;font-size:20px;color:#000;">35</span><span class="t" style="left:123.66px;top:1028.02px;font-size:20px;color:#000;">Encuestado 38</span><span class="t" style="left:352.03px;top:1028.02px;font-size:20px;color:#000;">26</span><span class="t" style="left:123.66px;top:1055px;font-size:20px;color:#000;">Encuestado 39</span><span class="t" style="left:352.02px;top:1055px;font-size:20px;color:#000;">28</span><span class="t" style="left:123.66px;top:1081.97px;font-size:20px;color:#000;">Encuestado 40</span><span class="t" style="left:351.99px;top:1081.97px;font-size:20px;color:#000;">25</span><span class="t" style="left:686.99px;top:137.84px;font-size:20px;color:#000;">25</span><span class="t" style="left:717.31px;top:137.84px;font-size:20px;color:#000;transform:scaleX(0.9698);">Minimo</span><div class="b" style="left:267.7px;top:24.78px;width:112.8px;height:1082.8px;border:3px solid #3568c4;box-sizing:border-box;box-shadow:inset 0 0 0 1px rgba(255,255,255,.85)"></div><div class="b" style="left:264.7px;top:21.58px;width:11.2px;height:11.2px;background:#3568c4;border:1.2px solid #fff;box-sizing:border-box;"></div><div class="b" style="left:264.7px;top:1100.58px;width:11.2px;height:11.2px;background:#3568c4;border:1.2px solid #fff;box-sizing:border-box;"></div><div class="b" style="left:372.6px;top:21.58px;width:11.2px;height:11.2px;background:#3568c4;border:1.2px solid #fff;box-sizing:border-box;"></div><div class="b" style="left:372.6px;top:1100.58px;width:11.2px;height:11.2px;background:#3568c4;border:1.2px solid #fff;box-sizing:border-box;"></div><div class="b" style="left:606px;top:162.65px;width:126px;height:25.38px;background:#fff;"></div><div class="b" style="left:603.2px;top:159.25px;width:113px;height:3.3px;background:#217346;"></div><div class="b" style="left:603.2px;top:159.25px;width:3.2px;height:32.18px;background:#217346;"></div><div class="b" style="left:603.2px;top:188.03px;width:103px;height:3.3px;background:#217346;"></div><div class="b" style="left:708.4px;top:188.03px;width:9px;height:4.6px;background:#217346;"></div><span class="t" style="left:610.86px;top:164.8px;font-size:21.2px;color:#111;transform:scaleX(0.9062);">=MAX(</span><span class="t" style="left:670.94px;top:164.8px;font-size:21.2px;color:#3d6fc6;transform:scaleX(0.8958);">C2:C41</span><span class="t" style="left:735.53px;top:164.8px;font-size:21.2px;color:#111;transform:scaleX(0.5871);">)</span><div class="b" style="left:739.7px;top:163.45px;width:1.9px;height:22.8px;background:#111;"></div></div><div class="b" style="left:0px;top:403.8px;width:824px;height:24.2px;background:#e6e6e6;"></div><div class="b" style="left:605px;top:404.3px;width:108.4px;height:23.8px;background:#d2d2d2;"></div><div class="b" style="left:604.6px;top:424.3px;width:109.2px;height:3.9px;background:#217346;"></div><span class="t" style="left:81.53px;top:405.89px;font-size:18.2px;color:#262626;-webkit-text-stroke:0.35px #262626;">A</span><span class="t" style="left:188.26px;top:405.89px;font-size:18.2px;color:#262626;-webkit-text-stroke:0.35px #262626;">B</span><span class="t" style="left:317.91px;top:405.89px;font-size:18.2px;color:#262626;-webkit-text-stroke:0.35px #262626;">C</span><span class="t" style="left:431.22px;top:405.89px;font-size:18.2px;color:#262626;-webkit-text-stroke:0.35px #262626;">D</span><span class="t" style="left:545.17px;top:405.89px;font-size:18.2px;color:#262626;-webkit-text-stroke:0.35px #262626;">E</span><span class="t" style="left:653.66px;top:405.89px;font-size:18.2px;color:#217346;-webkit-text-stroke:0.35px #217346;">F</span><span class="t" style="left:760.74px;top:405.89px;font-size:18.2px;color:#262626;-webkit-text-stroke:0.35px #262626;">G</span><div class="b" style="left:55.7px;top:404px;width:1.6px;height:24px;background:#ababab;"></div><div class="b" style="left:117.2px;top:404px;width:1.6px;height:24px;background:#ababab;"></div><div class="b" style="left:269.2px;top:404px;width:1.6px;height:24px;background:#ababab;"></div><div class="b" style="left:377.2px;top:404px;width:1.6px;height:24px;background:#ababab;"></div><div class="b" style="left:496.2px;top:404px;width:1.6px;height:24px;background:#ababab;"></div><div class="b" style="left:5px;top:427.4px;width:824px;height:1.5px;background:#a3a3a3;"></div><div class="b" style="left:604.6px;top:426.2px;width:109.2px;height:2.2px;background:#217346;"></div><svg class="b" style="left:41px;top:412px" width="10" height="10"><path d="M9.2,0.6 V9.2 H0.6 Z" fill="#b2b2b2"/></svg><div class="b" style="left:0px;top:0px;width:5.2px;height:1558px;background:#217346;"></div><div class="b" style="left:820.4px;top:0px;width:3.6px;height:1558px;background:#217346;"></div><div class="b" style="left:0px;top:1554.7px;width:824px;height:3.3px;background:#217346;"></div></div>
<div class="win" style="left:1737px;top:0;width:823px;height:873.4px"><div class="b" style="left:0px;top:0px;width:823px;height:70.6px;background:#217346;"></div><div class="b" style="left:0px;top:70.6px;width:823px;height:242.6px;background:#f4f2f0;"></div><div class="b" style="left:0px;top:313.2px;width:823px;height:115px;background:#e6e6e6;"></div><div class="b" style="left:0px;top:313.5px;width:823px;height:1.9px;background:#d5d4d2;"></div><span class="t" style="left:496.88px;top:24.98px;font-size:24.6px;color:#f1f8f4;transform:scaleX(0.9485);">histograma</span><span class="t" style="left:624.35px;top:24.98px;font-size:24.6px;color:#f1f8f4;transform:scaleX(1.2321);">-</span><span class="t" style="left:645.3px;top:24.98px;font-size:24.6px;color:#f1f8f4;transform:scaleX(0.8904);">Excel</span><span class="t" style="left:32.35px;top:89.96px;font-size:23.2px;color:#484644;transform:scaleX(1.0676);">Archivo</span><span class="t" style="left:153.98px;top:89.96px;font-size:23.2px;color:#3b3a39;transform:scaleX(1.1754);-webkit-text-stroke:0.5px #3b3a39;">Inicio</span><span class="t" style="left:238.36px;top:89.96px;font-size:23.2px;color:#484644;transform:scaleX(1.0929);">Insertar</span><div class="b" style="left:340px;top:80px;width:112.3px;height:40px;overflow:hidden"><span class="t" style="left:6.6px;top:9.96px;font-size:23.2px;color:#484644;transform:scaleX(1.1046);">Disposición</span></div><span class="t" style="left:467.85px;top:89.96px;font-size:23.2px;color:#484644;transform:scaleX(1.0751);">Fórmulas</span><span class="t" style="left:588.9px;top:89.96px;font-size:23.2px;color:#484644;transform:scaleX(1.1060);">Datos</span><span class="t" style="left:677.71px;top:89.96px;font-size:23.2px;color:#484644;transform:scaleX(1.0452);">Revisar</span><span class="t" style="left:783.4px;top:89.96px;font-size:23.2px;color:#484644;transform:scaleX(0.9812);">Vista</span><div class="b" style="left:227.2px;top:81.8px;width:1.4px;height:35px;background:#d5d3d1;"></div><div class="b" style="left:338.5px;top:81.8px;width:1.4px;height:35px;background:#d5d3d1;"></div><div class="b" style="left:459.7px;top:81.8px;width:1.4px;height:35px;background:#d5d3d1;"></div><div class="b" style="left:579.3px;top:81.8px;width:1.4px;height:35px;background:#d5d3d1;"></div><div class="b" style="left:667.9px;top:81.8px;width:1.4px;height:35px;background:#d5d3d1;"></div><div class="b" style="left:771.6px;top:81.8px;width:1.4px;height:35px;background:#d5d3d1;"></div><div class="b" style="left:155.4px;top:119px;width:64px;height:5.8px;background:#217346;"></div><div class="b" style="left:188.2px;top:136.8px;width:1.6px;height:169px;background:#c2c0be;"></div><div class="b" style="left:488.8px;top:136.8px;width:1.6px;height:169px;background:#c2c0be;"></div><div class="b" style="left:733.4px;top:136.8px;width:1.6px;height:169px;background:#c2c0be;"></div><span class="t" style="left:31.71px;top:211.68px;font-size:22.7px;color:#444240;transform:scaleX(0.9634);">Pegar</span><span class="t" style="left:16.4px;top:289.45px;font-size:19.9px;color:#484644;transform:scaleX(1.1034);">Portapapeles</span><span class="t" style="left:287.54px;top:289.45px;font-size:19.9px;color:#484644;transform:scaleX(1.1373);">Fuente</span><span class="t" style="left:544.46px;top:289.35px;font-size:19.9px;color:#484644;transform:scaleX(1.1371);">Alineación</span><span class="t" style="left:749.72px;top:207.56px;font-size:23.2px;color:#444240;transform:scaleX(1.0410);">Número</span><div class="b" style="left:205.4px;top:136.6px;width:182.4px;height:43.6px;background:#fff;border:1.5px solid #c6c4c2;box-sizing:border-box;"></div><div class="b" style="left:392.2px;top:136.6px;width:82px;height:43.6px;background:#fff;border:1.5px solid #c6c4c2;box-sizing:border-box;"></div><span class="t" style="left:210.81px;top:147.79px;font-size:22.1px;color:#444240;transform:scaleX(1.0647);">Calibri</span><span class="t" style="left:398.15px;top:146.55px;font-size:24.4px;color:#444240;transform:scaleX(0.7804);">11</span><span class="t" style="left:214.32px;top:188.55px;font-size:26.4px;color:#262524;transform:scaleX(1.1791);font-weight:bold;">N</span><span class="t" style="left:263.85px;top:188.55px;font-size:26.4px;color:#444240;transform:scaleX(0.9233);font-style:italic;">K</span><span class="t" style="left:312.02px;top:188.55px;font-size:26.4px;color:#444240;transform:scaleX(0.7304);">S</span><span class="t" style="left:393.94px;top:184.2px;font-size:34.5px;color:#444240;transform:scaleX(0.9180);">A</span><span class="t" style="left:443.15px;top:190.97px;font-size:26.5px;color:#444240;transform:scaleX(0.9561);">A</span><span class="t" style="left:382.15px;top:230.48px;font-size:29.2px;color:#444240;transform:scaleX(0.9193);">A</span><div class="b" style="left:762.2px;top:136.8px;width:70px;height:58.2px;background:#fff;border:1.5px solid #d2d0ce;box-sizing:border-box;"></div><span class="t" style="left:777.35px;top:147.17px;font-size:37.6px;color:#444240;transform:scaleX(0.9300);">%</span><span class="t" style="left:655.69px;top:141.01px;font-size:19.6px;color:#444240;transform:scaleX(1.0921);">ab</span><span class="t" style="left:656.03px;top:154.01px;font-size:19.6px;color:#444240;transform:scaleX(0.9230);">c</span><span class="t" style="left:616px;top:246px;font-size:20px;color:#444240;transform:rotate(-45deg);transform-origin:0 50%;">ab</span><div class="b" style="left:16.2px;top:335.8px;width:306px;height:48.2px;background:#fff;border:1.5px solid #c6c6c6;box-sizing:border-box;"></div><div class="b" style="left:381.6px;top:335.8px;width:210.6px;height:48.2px;background:#fff;border:1.5px solid #c6c6c6;box-sizing:border-box;"></div><div class="b" style="left:598.5px;top:335.8px;width:240px;height:48.2px;background:#fff;border:1.5px solid #c6c6c6;box-sizing:border-box;"></div><span class="t" style="left:26.38px;top:348.98px;font-size:24.6px;color:#4a4a4a;">F10</span><span class="t" style="left:544.42px;top:344.19px;font-size:26px;color:#5f5f5f;transform:scaleX(1.6419);font-style:italic;font-family:'Liberation Serif',serif;">f</span><span class="t" style="left:555.1px;top:352.7px;font-size:17.6px;color:#5f5f5f;transform:scaleX(1.3978);font-weight:bold;font-style:italic;font-family:'Liberation Serif',serif;">x</span><svg class="b" style="left:0;top:0" width="824" height="430" viewBox="0 0 824 430"><g fill="none" stroke="#e3f1e9" stroke-width="2.6" stroke-linejoin="round"><path d="M46.6,26 H75 V54 H50.8 L46.6,49.8 Z"/><path d="M51.6,26 V38 H69.4 V26"/><path d="M52.9,54 V45 H68.2 V54"/></g><g fill="none" stroke="#e3f1e9" stroke-width="2.5"><path d="M104.2,25 V37.2 H116.3"/><path d="M104.6,36.8 C108.5,30.2 113.5,26.6 119,26.6 C125.3,26.6 129.8,31 129.8,36.4 C129.8,42.2 125,45.6 113,55.2"/></g><polyline points="143,34.3 148.5,39.9 154,34.3" fill="none" stroke="#e3f1e9" stroke-width="2.6"/><g transform="translate(75,0)"><g fill="none" stroke="#5c9e7a" stroke-width="2.5" transform="translate(234,0) scale(-1,1)"><path d="M104.2,25 V37.2 H116.3"/><path d="M104.6,36.8 C108.5,30.2 113.5,26.6 119,26.6 C125.3,26.6 129.8,31 129.8,36.4 C129.8,42.2 125,45.6 113,55.2"/></g></g><polyline points="218,34.3 223.5,39.9 229,34.3" fill="none" stroke="#5c9e7a" stroke-width="2.6"/><g fill="none" stroke="#e3f1e9" stroke-width="2.4"><rect x="252.3" y="26" width="28.6" height="28.2"/><path d="M261.8,26 V45 M272,26 V54.2 M252.3,35.5 H272 M252.3,45 H280.9"/></g><path d="M314.3,33.3 H328.6" stroke="#e3f1e9" stroke-width="2.2" fill="none"/><polyline points="315.2,39 321.5,43.6 327.8,39" fill="none" stroke="#e3f1e9" stroke-width="2.8"/><rect x="41.5" y="152.7" width="37" height="44" fill="#fbfbfb" stroke="#e9932f" stroke-width="2.6"/><rect x="43.9" y="155" width="32.2" height="39.5" fill="none" stroke="#fbd8a0" stroke-width="1.6"/><path d="M49.5,158.2 V151.6 H54.4 C54.4,147.6 57.2,145.3 60,145.3 C62.8,145.3 65.6,147.6 65.6,151.6 H70.5 V158.2 Z" fill="#f5f4f3" stroke="#7a7876" stroke-width="2"/><rect x="66.2" y="168.3" width="24.4" height="32" fill="#fafafa" stroke="#3b3a39" stroke-width="2.2"/><polyline points="54.6,249.8 60.1,255.3 65.6,249.8" fill="none" stroke="#444240" stroke-width="2"/><g fill="none" stroke="#444240" stroke-width="2.4" stroke-linecap="round"><path d="M118.3,143.2 L121.4,153 L127.8,166"/><path d="M127.4,143.2 L124.2,153 L117.8,166"/></g><circle cx="117.5" cy="169" r="3.3" fill="#bfe4f7" stroke="#2e9bd8" stroke-width="2"/><circle cx="128.1" cy="169" r="3.3" fill="#bfe4f7" stroke="#2e9bd8" stroke-width="2"/><g fill="none" stroke="#444240" stroke-width="2"><path d="M121,216 H108.7 V190 H118.5 L121.5,192.6"/><path d="M117.8,196.3 H129 L136.7,203.6 V217.8 H117.8 Z" fill="#fafafa"/><path d="M129,196.3 V203.6 H136.7"/><path d="M122.4,208.4 H131.8 M122.4,212.3 H131.8" stroke-width="1.5"/></g><polyline points="150.8,201.8 156.3,207.3 161.8,201.8" fill="none" stroke="#444240" stroke-width="2"/><g transform="translate(124.3,248.2) rotate(40) scale(0.87)"><rect x="-2.3" y="-19" width="4.6" height="12.5" rx="1.5" fill="#f0efee" stroke="#3b3a39" stroke-width="1.8"/><rect x="-8.5" y="-6.6" width="17" height="4.4" fill="#f0efee" stroke="#3b3a39" stroke-width="1.8"/><path d="M-8.5,-2 H8.5 L10.5,12.5 C6,15 2,11 -2,13.5 C-6,16 -9,13 -11.5,14 Z" fill="#fde3bd" stroke="#e9932f" stroke-width="1.9" stroke-linejoin="round"/></g><polyline points="369.5,157.3 375.25,163.10000000000002 381.0,157.3" fill="none" stroke="#444240" stroke-width="2.1"/><polyline points="456.2,157.3 461.95,163.10000000000002 467.7,157.3" fill="none" stroke="#444240" stroke-width="2.1"/><path d="M312,214.3 H326.8" stroke="#444240" stroke-width="1.6"/><polyline points="347.3,201.8 352.8,207.3 358.3,201.8" fill="none" stroke="#444240" stroke-width="2.3"/><path d="M377.6,185.5 V224.5 M285.5,231.5 V270.5" stroke="#c8c6c4" stroke-width="1.4"/><polyline points="413.9,195.6 418.5,191 423.1,195.6" fill="none" stroke="#2e9bd8" stroke-width="1.8"/><polyline points="459.6,190.8 464.2,195.4 468.8,190.8" fill="none" stroke="#2e9bd8" stroke-width="1.8"/><g fill="none" stroke="#1b1a19" stroke-width="2.2"><rect x="212.2" y="236" width="26.8" height="26.4"/><path d="M225.6,236 V262.4 M212.2,249.2 H239" fill="none"/></g><polyline points="255.2,247.8 260.7,253.3 266.2,247.8" fill="none" stroke="#444240" stroke-width="2.3"/><g fill="none" stroke="#444240" stroke-width="1.9" stroke-linejoin="round"><path d="M306.2,249.2 L314.8,239.6 L324.6,248.6 L313.4,257 Z"/><path d="M312.5,242.2 V237.6 C312.5,235 317.8,235 317.8,237.6 V242.4"/></g><path d="M324.2,243.2 C327.8,245.5 329.2,249.8 327.6,254.4 C326.4,251 325.6,249.6 323.2,247.8 Z" fill="#1e6fb5" stroke="#1e6fb5" stroke-width="1.2"/><rect x="300" y="258.3" width="30.3" height="6.3" fill="#fdf1c7"/><polyline points="343.5,247.8 349.0,253.3 354.5,247.8" fill="none" stroke="#444240" stroke-width="2.3"/><rect x="374.8" y="257.6" width="30.6" height="7" fill="#ea0a14"/><polyline points="418.2,247.8 423.7,253.3 429.2,247.8" fill="none" stroke="#444240" stroke-width="2.3"/><rect x="598.6" y="137.2" width="40.6" height="42.6" fill="#cbc9c7" stroke="#b3b1af" stroke-width="1.2"/><path d="M513.7,143.3 H540.6 M517.9000000000001,151 H536.1 M513.7,158.7 H540.6 M559.9,148.9 H586.8 M564.1,156.6 H582.3 M559.9,164.3 H586.8 M606.1,156.6 H633.0 M610.3000000000001,164.3 H628.5 M606.1,172 H633.0 M513.7,191.3 H540.6 M513.7,199 H532.6 M513.7,206.7 H540.6 M513.7,214.4 H532.6 M559.9,191.3 H586.8 M564.1,199 H582.6 M559.9,206.7 H586.8 M564.1,214.4 H582.6 M606.1,191.3 H633 M614.1,199 H633 M606.1,206.7 H633 M614.1,214.4 H633 M513.7,237.5 H540.6 M529.1,245.2 H540.6 M529.1,252.9 H540.6 M513.7,260.6 H540.6 M559.9,237.5 H586.8 M575.3,245.2 H586.8 M575.3,252.9 H586.8 M559.9,260.6 H586.8 " stroke="#444240" stroke-width="2" fill="none"/><g fill="none" stroke="#2b8ed0" stroke-width="2"><path d="M514.6,249 H525.6 M519.2,244.3 L514.6,249 L519.2,253.7"/><path d="M560.3,249 H571.3 M566.7,244.3 L571.3,249 L566.7,253.7"/></g><path d="M603.3,231.5 V271.3" stroke="#c8c6c4" stroke-width="1.4"/><g fill="none" stroke="#2b8ed0" stroke-width="2" stroke-linejoin="round"><path d="M668,170.2 H677.6 C682.2,170.2 682.2,161.8 677.6,161.8 H675"/><path d="M672.6,165.4 L667.6,170.2 L672.6,175"/></g><rect x="653.3" y="195.6" width="26.6" height="14.6" fill="#cfe8f8"/><g fill="none" stroke="#1b1a19" stroke-width="2"><rect x="653.3" y="189.9" width="26.6" height="26.3"/><path d="M666.6,189.9 V195.6 M666.6,210.2 V216.2"/></g><path d="M653.3,195.6 H679.9 M653.3,210.2 H679.9" stroke="#2b8ed0" stroke-width="1.8" fill="none"/><g fill="none" stroke="#2b8ed0" stroke-width="1.8"><path d="M657.2,203 H676 M661,199.3 L657.2,203 L661,206.7 M672.2,199.3 L676,203 L672.2,206.7"/></g><polyline points="695.8,201.5 701.3,207.0 706.8,201.5" fill="none" stroke="#444240" stroke-width="2.3"/><g fill="none" stroke="#2b8ed0" stroke-width="1.9"><path d="M627.6,262.8 L647.4,243.2 M639.4,242.6 H648 V251.2"/></g><polyline points="657.3,247.6 662.8,253.1 668.3,247.6" fill="none" stroke="#444240" stroke-width="2.3"/><g fill="none" stroke="#484644" stroke-width="2.1"><path d="M168.20000000000002,302.4 V292.2 H178.4"/><path d="M172.4,296.4 L181.4,305.4 M181.6,298.9 V305.59999999999997 H174.9"/></g><g fill="none" stroke="#484644" stroke-width="2.1"><path d="M468.40000000000003,302.4 V292.2 H478.6"/><path d="M472.6,296.4 L481.6,305.4 M481.8,298.9 V305.59999999999997 H475.1"/></g><g fill="none" stroke="#484644" stroke-width="2.1"><path d="M713.0,302.0 V291.8 H723.2"/><path d="M717.2,296.0 L726.2,305.0 M726.4000000000001,298.5 V305.2 H719.7"/></g><polyline points="786.4,245.6 792.1,251.4 797.8,245.6" fill="none" stroke="#444240" stroke-width="2.2"/><path d="M295.7,354.4 H309.5 L302.6,361.8 Z" fill="#777"/><rect x="351" y="350.0" width="2.4" height="2.4" fill="#9a9a9a"/><rect x="351" y="358.5" width="2.4" height="2.4" fill="#9a9a9a"/><rect x="351" y="367.0" width="2.4" height="2.4" fill="#9a9a9a"/><path d="M407.5,351.4 L426.8,369 M426.8,351.4 L407.5,369" stroke="#c6c6c6" stroke-width="2.7" fill="none"/><path d="M476.3,361.3 L484.6,369.4 L499.6,350.4" stroke="#c6c6c6" stroke-width="3.4" fill="none" stroke-linejoin="miter"/></svg><div class="b" style="left:0;top:428.2px;width:823px;height:445.2px;overflow:hidden;background:#fff"><div class="b" style="left:0px;top:0px;width:56.4px;height:445.2px;background:#e6e6e6;"></div><div class="b" style="left:118px;top:0px;width:152px;height:26.98px;background:#d9e1f2;"></div><div class="b" style="left:270px;top:0px;width:108px;height:26.98px;background:#e2efda;"></div><div class="b" style="left:378px;top:0px;width:119px;height:26.98px;background:#fff2cc;"></div><div class="b" style="left:56px;top:26.18px;width:823px;height:1.6px;background:#d9d9d9;"></div><div class="b" style="left:5px;top:26.18px;width:51px;height:1.6px;background:#b4b4b4;"></div><div class="b" style="left:56px;top:53.15px;width:823px;height:1.6px;background:#d9d9d9;"></div><div class="b" style="left:5px;top:53.15px;width:51px;height:1.6px;background:#b4b4b4;"></div><div class="b" style="left:56px;top:80.13px;width:823px;height:1.6px;background:#d9d9d9;"></div><div class="b" style="left:5px;top:80.13px;width:51px;height:1.6px;background:#b4b4b4;"></div><div class="b" style="left:56px;top:107.1px;width:823px;height:1.6px;background:#d9d9d9;"></div><div class="b" style="left:5px;top:107.1px;width:51px;height:1.6px;background:#b4b4b4;"></div><div class="b" style="left:56px;top:134.07px;width:823px;height:1.6px;background:#d9d9d9;"></div><div class="b" style="left:5px;top:134.07px;width:51px;height:1.6px;background:#b4b4b4;"></div><div class="b" style="left:56px;top:161.05px;width:823px;height:1.6px;background:#d9d9d9;"></div><div class="b" style="left:5px;top:161.05px;width:51px;height:1.6px;background:#b4b4b4;"></div><div class="b" style="left:56px;top:188.03px;width:823px;height:1.6px;background:#d9d9d9;"></div><div class="b" style="left:5px;top:188.03px;width:51px;height:1.6px;background:#b4b4b4;"></div><div class="b" style="left:56px;top:215px;width:823px;height:1.6px;background:#d9d9d9;"></div><div class="b" style="left:5px;top:215px;width:51px;height:1.6px;background:#b4b4b4;"></div><div class="b" style="left:56px;top:241.97px;width:823px;height:1.6px;background:#d9d9d9;"></div><div class="b" style="left:5px;top:241.97px;width:51px;height:1.6px;background:#b4b4b4;"></div><div class="b" style="left:56px;top:268.95px;width:823px;height:1.6px;background:#d9d9d9;"></div><div class="b" style="left:5px;top:268.95px;width:51px;height:1.6px;background:#b4b4b4;"></div><div class="b" style="left:56px;top:295.93px;width:823px;height:1.6px;background:#d9d9d9;"></div><div class="b" style="left:5px;top:295.93px;width:51px;height:1.6px;background:#b4b4b4;"></div><div class="b" style="left:56px;top:322.9px;width:823px;height:1.6px;background:#d9d9d9;"></div><div class="b" style="left:5px;top:322.9px;width:51px;height:1.6px;background:#b4b4b4;"></div><div class="b" style="left:56px;top:349.88px;width:823px;height:1.6px;background:#d9d9d9;"></div><div class="b" style="left:5px;top:349.88px;width:51px;height:1.6px;background:#b4b4b4;"></div><div class="b" style="left:56px;top:376.85px;width:823px;height:1.6px;background:#d9d9d9;"></div><div class="b" style="left:5px;top:376.85px;width:51px;height:1.6px;background:#b4b4b4;"></div><div class="b" style="left:56px;top:403.82px;width:823px;height:1.6px;background:#d9d9d9;"></div><div class="b" style="left:5px;top:403.82px;width:51px;height:1.6px;background:#b4b4b4;"></div><div class="b" style="left:56px;top:430.8px;width:823px;height:1.6px;background:#d9d9d9;"></div><div class="b" style="left:5px;top:430.8px;width:51px;height:1.6px;background:#b4b4b4;"></div><div class="b" style="left:56px;top:457.78px;width:823px;height:1.6px;background:#d9d9d9;"></div><div class="b" style="left:5px;top:457.78px;width:51px;height:1.6px;background:#b4b4b4;"></div><div class="b" style="left:117.2px;top:0px;width:1.6px;height:445.2px;background:#d9d9d9;"></div><div class="b" style="left:269.2px;top:0px;width:1.6px;height:445.2px;background:#d9d9d9;"></div><div class="b" style="left:377.2px;top:0px;width:1.6px;height:445.2px;background:#d9d9d9;"></div><div class="b" style="left:496.2px;top:0px;width:1.6px;height:445.2px;background:#d9d9d9;"></div><div class="b" style="left:604.2px;top:0px;width:1.6px;height:445.2px;background:#d9d9d9;"></div><div class="b" style="left:712.2px;top:0px;width:1.6px;height:445.2px;background:#d9d9d9;"></div><div class="b" style="left:55.8px;top:0px;width:1.5px;height:445.2px;background:#a6a6a6;"></div><div class="b" style="left:5px;top:243.58px;width:51px;height:25.38px;background:#d2d2d2;"></div><div class="b" style="left:54.2px;top:242.38px;width:2.8px;height:27.78px;background:#217346;"></div><span class="t" style="left:27.45px;top:4.92px;font-size:18.4px;color:#262626;transform:scaleX(0.5672);-webkit-text-stroke:0.4px #262626;">1</span><span class="t" style="left:27.07px;top:31.9px;font-size:18.4px;color:#262626;-webkit-text-stroke:0.4px #262626;">2</span><span class="t" style="left:27.33px;top:58.87px;font-size:18.4px;color:#262626;transform:scaleX(0.9629);-webkit-text-stroke:0.4px #262626;">3</span><span class="t" style="left:27.62px;top:85.85px;font-size:18.4px;color:#262626;transform:scaleX(0.9060);-webkit-text-stroke:0.4px #262626;">4</span><span class="t" style="left:27.29px;top:112.82px;font-size:18.4px;color:#262626;transform:scaleX(0.9629);-webkit-text-stroke:0.4px #262626;">5</span><span class="t" style="left:27.08px;top:139.8px;font-size:18.4px;color:#262626;transform:scaleX(0.9894);-webkit-text-stroke:0.4px #262626;">6</span><span class="t" style="left:27.05px;top:166.77px;font-size:18.4px;color:#262626;transform:scaleX(1.0042);-webkit-text-stroke:0.4px #262626;">7</span><span class="t" style="left:27.22px;top:193.75px;font-size:18.4px;color:#262626;transform:scaleX(0.9729);-webkit-text-stroke:0.4px #262626;">8</span><span class="t" style="left:27.15px;top:220.72px;font-size:18.4px;color:#262626;transform:scaleX(0.9883);-webkit-text-stroke:0.4px #262626;">9</span><span class="t" style="left:22.05px;top:247.7px;font-size:18.4px;color:#217346;transform:scaleX(0.7522);-webkit-text-stroke:0.4px #217346;">10</span><span class="t" style="left:22.69px;top:274.67px;font-size:18.4px;color:#262626;transform:scaleX(0.5450);-webkit-text-stroke:0.4px #262626;">11</span><span class="t" style="left:22.03px;top:301.65px;font-size:18.4px;color:#262626;transform:scaleX(0.7608);-webkit-text-stroke:0.4px #262626;">12</span><span class="t" style="left:22.04px;top:328.62px;font-size:18.4px;color:#262626;transform:scaleX(0.7559);-webkit-text-stroke:0.4px #262626;">13</span><span class="t" style="left:22.06px;top:355.6px;font-size:18.4px;color:#262626;transform:scaleX(0.7449);-webkit-text-stroke:0.4px #262626;">14</span><span class="t" style="left:22.04px;top:382.57px;font-size:18.4px;color:#262626;transform:scaleX(0.7544);-webkit-text-stroke:0.4px #262626;">15</span><span class="t" style="left:22.04px;top:409.55px;font-size:18.4px;color:#262626;transform:scaleX(0.7559);-webkit-text-stroke:0.4px #262626;">16</span><span class="t" style="left:22.03px;top:436.52px;font-size:18.4px;color:#262626;transform:scaleX(0.7608);-webkit-text-stroke:0.4px #262626;">17</span><span class="t" style="left:22.04px;top:463.5px;font-size:18.4px;color:#262626;transform:scaleX(0.7555);-webkit-text-stroke:0.4px #262626;">18</span><div class="b" style="left:117.4px;top:0px;width:2px;height:1106.98px;background:#111;"></div><div class="b" style="left:269px;top:0px;width:2px;height:1106.98px;background:#111;"></div><div class="b" style="left:377px;top:0px;width:2px;height:1106.98px;background:#111;"></div><div class="b" style="left:496px;top:0px;width:2px;height:324.7px;background:#111;"></div><div class="b" style="left:117.4px;top:25.98px;width:261.6px;height:2px;background:#111;"></div><div class="b" style="left:379px;top:25.98px;width:119px;height:2px;background:#111;"></div><div class="b" style="left:117.4px;top:52.95px;width:261.6px;height:2px;background:#111;"></div><div class="b" style="left:379px;top:52.95px;width:119px;height:2px;background:#111;"></div><div class="b" style="left:117.4px;top:79.93px;width:261.6px;height:2px;background:#111;"></div><div class="b" style="left:379px;top:79.93px;width:119px;height:2px;background:#111;"></div><div class="b" style="left:117.4px;top:106.9px;width:261.6px;height:2px;background:#111;"></div><div class="b" style="left:379px;top:106.9px;width:119px;height:2px;background:#111;"></div><div class="b" style="left:117.4px;top:133.88px;width:261.6px;height:2px;background:#111;"></div><div class="b" style="left:379px;top:133.88px;width:119px;height:2px;background:#111;"></div><div class="b" style="left:117.4px;top:160.85px;width:261.6px;height:2px;background:#111;"></div><div class="b" style="left:379px;top:160.85px;width:119px;height:2px;background:#111;"></div><div class="b" style="left:117.4px;top:187.83px;width:261.6px;height:2px;background:#111;"></div><div class="b" style="left:379px;top:187.83px;width:119px;height:2px;background:#111;"></div><div class="b" style="left:117.4px;top:214.8px;width:261.6px;height:2px;background:#111;"></div><div class="b" style="left:379px;top:214.8px;width:119px;height:2px;background:#111;"></div><div class="b" style="left:117.4px;top:241.78px;width:261.6px;height:2px;background:#111;"></div><div class="b" style="left:379px;top:241.78px;width:119px;height:2px;background:#111;"></div><div class="b" style="left:117.4px;top:268.75px;width:261.6px;height:2px;background:#111;"></div><div class="b" style="left:379px;top:268.75px;width:119px;height:2px;background:#111;"></div><div class="b" style="left:117.4px;top:295.73px;width:261.6px;height:2px;background:#111;"></div><div class="b" style="left:379px;top:295.73px;width:119px;height:2px;background:#111;"></div><div class="b" style="left:117.4px;top:322.7px;width:261.6px;height:2px;background:#111;"></div><div class="b" style="left:379px;top:322.7px;width:119px;height:2px;background:#111;"></div><div class="b" style="left:117.4px;top:349.68px;width:261.6px;height:2px;background:#111;"></div><div class="b" style="left:117.4px;top:376.65px;width:261.6px;height:2px;background:#111;"></div><div class="b" style="left:117.4px;top:403.62px;width:261.6px;height:2px;background:#111;"></div><div class="b" style="left:117.4px;top:430.6px;width:261.6px;height:2px;background:#111;"></div><div class="b" style="left:117.4px;top:457.58px;width:261.6px;height:2px;background:#111;"></div><div class="b" style="left:117.4px;top:484.55px;width:261.6px;height:2px;background:#111;"></div><div class="b" style="left:117.4px;top:511.52px;width:261.6px;height:2px;background:#111;"></div><div class="b" style="left:117.4px;top:538.5px;width:261.6px;height:2px;background:#111;"></div><div class="b" style="left:117.4px;top:565.48px;width:261.6px;height:2px;background:#111;"></div><div class="b" style="left:117.4px;top:592.45px;width:261.6px;height:2px;background:#111;"></div><div class="b" style="left:117.4px;top:619.43px;width:261.6px;height:2px;background:#111;"></div><div class="b" style="left:117.4px;top:646.4px;width:261.6px;height:2px;background:#111;"></div><div class="b" style="left:117.4px;top:673.38px;width:261.6px;height:2px;background:#111;"></div><div class="b" style="left:117.4px;top:700.35px;width:261.6px;height:2px;background:#111;"></div><div class="b" style="left:117.4px;top:727.33px;width:261.6px;height:2px;background:#111;"></div><div class="b" style="left:117.4px;top:754.3px;width:261.6px;height:2px;background:#111;"></div><div class="b" style="left:117.4px;top:781.28px;width:261.6px;height:2px;background:#111;"></div><div class="b" style="left:117.4px;top:808.25px;width:261.6px;height:2px;background:#111;"></div><div class="b" style="left:117.4px;top:835.23px;width:261.6px;height:2px;background:#111;"></div><div class="b" style="left:117.4px;top:862.2px;width:261.6px;height:2px;background:#111;"></div><div class="b" style="left:117.4px;top:889.18px;width:261.6px;height:2px;background:#111;"></div><div class="b" style="left:117.4px;top:916.15px;width:261.6px;height:2px;background:#111;"></div><div class="b" style="left:117.4px;top:943.12px;width:261.6px;height:2px;background:#111;"></div><div class="b" style="left:117.4px;top:970.1px;width:261.6px;height:2px;background:#111;"></div><div class="b" style="left:117.4px;top:997.08px;width:261.6px;height:2px;background:#111;"></div><div class="b" style="left:117.4px;top:1024.05px;width:261.6px;height:2px;background:#111;"></div><div class="b" style="left:117.4px;top:1051.03px;width:261.6px;height:2px;background:#111;"></div><div class="b" style="left:117.4px;top:1078px;width:261.6px;height:2px;background:#111;"></div><div class="b" style="left:117.4px;top:1104.98px;width:261.6px;height:2px;background:#111;"></div><span class="t" style="left:123.56px;top:2.97px;font-size:20px;color:#000;">Nombre</span><span class="t" style="left:274.76px;top:2.97px;font-size:20px;color:#000;">Edad</span><span class="t" style="left:407.73px;top:2.97px;font-size:20px;color:#000;">Rango</span><span class="t" style="left:123.66px;top:29.95px;font-size:20px;color:#000;">Encuestado 1</span><span class="t" style="left:352.03px;top:29.95px;font-size:20px;color:#000;">26</span><span class="t" style="left:470.99px;top:29.95px;font-size:20px;color:#000;">25</span><span class="t" style="left:123.66px;top:56.92px;font-size:20px;color:#000;">Encuestado 2</span><span class="t" style="left:351.94px;top:56.92px;font-size:20px;color:#000;">30</span><span class="t" style="left:471.03px;top:56.92px;font-size:20px;color:#000;">26</span><span class="t" style="left:123.66px;top:83.9px;font-size:20px;color:#000;">Encuestado 3</span><span class="t" style="left:352.16px;top:83.9px;font-size:20px;color:#000;">32</span><span class="t" style="left:471.16px;top:83.9px;font-size:20px;color:#000;">27</span><span class="t" style="left:123.66px;top:110.87px;font-size:20px;color:#000;">Encuestado 4</span><span class="t" style="left:351.74px;top:110.87px;font-size:20px;color:#000;">34</span><span class="t" style="left:471.02px;top:110.87px;font-size:20px;color:#000;">28</span><span class="t" style="left:123.66px;top:137.84px;font-size:20px;color:#000;">Encuestado 5</span><span class="t" style="left:352.02px;top:137.84px;font-size:20px;color:#000;">28</span><span class="t" style="left:471.1px;top:137.84px;font-size:20px;color:#000;">29</span><span class="t" style="left:123.66px;top:164.82px;font-size:20px;color:#000;">Encuestado 6</span><span class="t" style="left:352.16px;top:164.82px;font-size:20px;color:#000;">27</span><span class="t" style="left:470.94px;top:164.82px;font-size:20px;color:#000;">30</span><span class="t" style="left:123.66px;top:191.8px;font-size:20px;color:#000;">Encuestado 7</span><span class="t" style="left:351.99px;top:191.8px;font-size:20px;color:#000;">25</span><span class="t" style="left:471.13px;top:191.8px;font-size:20px;color:#000;">31</span><span class="t" style="left:123.66px;top:218.77px;font-size:20px;color:#000;">Encuestado 8</span><span class="t" style="left:351.99px;top:218.77px;font-size:20px;color:#000;">25</span><span class="t" style="left:471.16px;top:218.77px;font-size:20px;color:#000;">32</span><span class="t" style="left:123.66px;top:245.75px;font-size:20px;color:#000;">Encuestado 9</span><span class="t" style="left:352.16px;top:245.75px;font-size:20px;color:#000;">27</span><span class="t" style="left:471.03px;top:245.75px;font-size:20px;color:#000;">33</span><span class="t" style="left:123.69px;top:272.72px;font-size:20px;color:#000;transform:scaleX(0.9840);">Encuestado 10</span><span class="t" style="left:352.1px;top:272.72px;font-size:20px;color:#000;">29</span><span class="t" style="left:470.74px;top:272.72px;font-size:20px;color:#000;">34</span><span class="t" style="left:123.71px;top:299.69px;font-size:20px;color:#000;transform:scaleX(0.9720);">Encuestado 11</span><span class="t" style="left:352.13px;top:299.69px;font-size:20px;color:#000;">31</span><span class="t" style="left:470.99px;top:299.69px;font-size:20px;color:#000;">35</span><span class="t" style="left:123.69px;top:326.67px;font-size:20px;color:#000;transform:scaleX(0.9840);">Encuestado 12</span><span class="t" style="left:351.94px;top:326.67px;font-size:20px;color:#000;">30</span><span class="t" style="left:123.69px;top:353.64px;font-size:20px;color:#000;transform:scaleX(0.9840);">Encuestado 13</span><span class="t" style="left:352.02px;top:353.64px;font-size:20px;color:#000;">28</span><span class="t" style="left:123.69px;top:380.62px;font-size:20px;color:#000;transform:scaleX(0.9840);">Encuestado 14</span><span class="t" style="left:351.94px;top:380.62px;font-size:20px;color:#000;">30</span><span class="t" style="left:123.69px;top:407.59px;font-size:20px;color:#000;transform:scaleX(0.9840);">Encuestado 15</span><span class="t" style="left:352.1px;top:407.59px;font-size:20px;color:#000;">29</span><span class="t" style="left:123.69px;top:434.57px;font-size:20px;color:#000;transform:scaleX(0.9840);">Encuestado 16</span><span class="t" style="left:352.03px;top:434.57px;font-size:20px;color:#000;">33</span><span class="t" style="left:686.99px;top:137.84px;font-size:20px;color:#000;">25</span><span class="t" style="left:686.99px;top:164.82px;font-size:20px;color:#000;">35</span><span class="t" style="left:717.31px;top:137.84px;font-size:20px;color:#000;transform:scaleX(0.9698);">Minimo</span><span class="t" style="left:717.3px;top:164.82px;font-size:20px;color:#000;transform:scaleX(0.9759);">Máximo</span><div class="b" style="left:603.4px;top:240.38px;width:112.6px;height:31.58px;border:3px solid #217346;box-sizing:border-box"></div><div class="b" style="left:709.8px;top:265.75px;width:9px;height:9px;background:#217346;border:1.3px solid #fff;"></div></div><div class="b" style="left:0px;top:403.8px;width:823px;height:24.2px;background:#e6e6e6;"></div><div class="b" style="left:605px;top:404.3px;width:108.4px;height:23.8px;background:#d2d2d2;"></div><div class="b" style="left:604.6px;top:424.3px;width:109.2px;height:3.9px;background:#217346;"></div><span class="t" style="left:81.53px;top:405.89px;font-size:18.2px;color:#262626;-webkit-text-stroke:0.35px #262626;">A</span><span class="t" style="left:188.26px;top:405.89px;font-size:18.2px;color:#262626;-webkit-text-stroke:0.35px #262626;">B</span><span class="t" style="left:317.91px;top:405.89px;font-size:18.2px;color:#262626;-webkit-text-stroke:0.35px #262626;">C</span><span class="t" style="left:431.22px;top:405.89px;font-size:18.2px;color:#262626;-webkit-text-stroke:0.35px #262626;">D</span><span class="t" style="left:545.17px;top:405.89px;font-size:18.2px;color:#262626;-webkit-text-stroke:0.35px #262626;">E</span><span class="t" style="left:653.66px;top:405.89px;font-size:18.2px;color:#217346;-webkit-text-stroke:0.35px #217346;">F</span><span class="t" style="left:760.74px;top:405.89px;font-size:18.2px;color:#262626;-webkit-text-stroke:0.35px #262626;">G</span><div class="b" style="left:55.7px;top:404px;width:1.6px;height:24px;background:#ababab;"></div><div class="b" style="left:117.2px;top:404px;width:1.6px;height:24px;background:#ababab;"></div><div class="b" style="left:269.2px;top:404px;width:1.6px;height:24px;background:#ababab;"></div><div class="b" style="left:377.2px;top:404px;width:1.6px;height:24px;background:#ababab;"></div><div class="b" style="left:496.2px;top:404px;width:1.6px;height:24px;background:#ababab;"></div><div class="b" style="left:5px;top:427.4px;width:823px;height:1.5px;background:#a3a3a3;"></div><div class="b" style="left:604.6px;top:426.2px;width:109.2px;height:2.2px;background:#217346;"></div><svg class="b" style="left:41px;top:412px" width="10" height="10"><path d="M9.2,0.6 V9.2 H0.6 Z" fill="#b2b2b2"/></svg><div class="b" style="left:0px;top:0px;width:5.2px;height:873.4px;background:#217346;"></div><div class="b" style="left:819.4px;top:0px;width:3.6px;height:873.4px;background:#217346;"></div><div class="b" style="left:0px;top:870.1px;width:823px;height:3.3px;background:#217346;"></div></div>
</body></html>
